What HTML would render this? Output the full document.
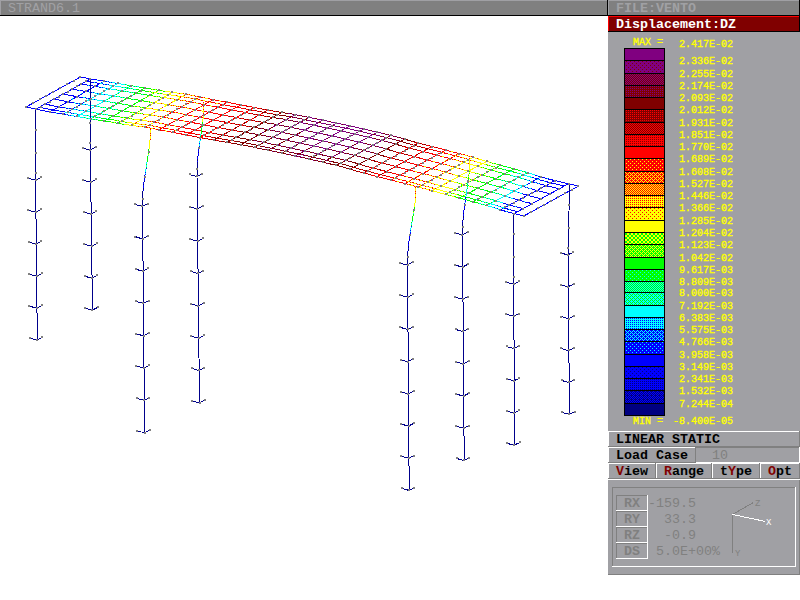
<!DOCTYPE html>
<html><head><meta charset="utf-8"><title>STRAND6.1 - VENTO</title>
<style>html,body{margin:0;padding:0;background:#fff;overflow:hidden}svg{display:block}text{font-family:"Liberation Mono",monospace;font-size:13.33px;white-space:pre}</style>
</head><body>
<svg width="800" height="600" viewBox="0 0 800 600">
<defs><linearGradient id="gOpt" gradientUnits="userSpaceOnUse" x1="768" y1="0" x2="792" y2="0"><stop offset="0" stop-color="#000"/><stop offset="0.0000" stop-color="#000"/><stop offset="0.0000" stop-color="#800000"/><stop offset="0.3333" stop-color="#800000"/><stop offset="0.3333" stop-color="#000"/><stop offset="1" stop-color="#000"/></linearGradient><linearGradient id="gtYpe" gradientUnits="userSpaceOnUse" x1="720" y1="0" x2="752" y2="0"><stop offset="0" stop-color="#000"/><stop offset="0.2500" stop-color="#000"/><stop offset="0.2500" stop-color="#800000"/><stop offset="0.5000" stop-color="#800000"/><stop offset="0.5000" stop-color="#000"/><stop offset="1" stop-color="#000"/></linearGradient><linearGradient id="gRange" gradientUnits="userSpaceOnUse" x1="664" y1="0" x2="704" y2="0"><stop offset="0" stop-color="#000"/><stop offset="0.0000" stop-color="#000"/><stop offset="0.0000" stop-color="#800000"/><stop offset="0.2000" stop-color="#800000"/><stop offset="0.2000" stop-color="#000"/><stop offset="1" stop-color="#000"/></linearGradient><linearGradient id="gView" gradientUnits="userSpaceOnUse" x1="616" y1="0" x2="648" y2="0"><stop offset="0" stop-color="#000"/><stop offset="0.0000" stop-color="#000"/><stop offset="0.0000" stop-color="#800000"/><stop offset="0.2500" stop-color="#800000"/><stop offset="0.2500" stop-color="#000"/><stop offset="1" stop-color="#000"/></linearGradient><pattern id="p1" x="625" y="61" width="4" height="4" patternUnits="userSpaceOnUse"><rect width="4" height="4" fill="#800080"/><rect x="1" y="0" width="1" height="1" fill="#800000"/><rect x="3" y="2" width="1" height="1" fill="#800000"/></pattern><pattern id="p2" x="625" y="74" width="2" height="2" patternUnits="userSpaceOnUse"><rect width="2" height="2" fill="#800080"/><rect x="0" y="0" width="1" height="1" fill="#800000"/><rect x="1" y="1" width="1" height="1" fill="#800000"/></pattern><pattern id="p3" x="625" y="86" width="2" height="2" patternUnits="userSpaceOnUse"><rect width="2" height="2" fill="#800000"/><rect x="1" y="0" width="1" height="1" fill="#800080"/></pattern><pattern id="p4" x="625" y="110" width="2" height="2" patternUnits="userSpaceOnUse"><rect width="2" height="2" fill="#800000"/><rect x="1" y="0" width="1" height="1" fill="#ff0000"/></pattern><pattern id="p5" x="625" y="123" width="2" height="2" patternUnits="userSpaceOnUse"><rect width="2" height="2" fill="#ff0000"/><rect x="0" y="0" width="1" height="1" fill="#800000"/><rect x="1" y="1" width="1" height="1" fill="#800000"/></pattern><pattern id="p6" x="625" y="135" width="2" height="2" patternUnits="userSpaceOnUse"><rect width="2" height="2" fill="#ff0000"/><rect x="1" y="0" width="1" height="1" fill="#800000"/></pattern><pattern id="p7" x="625" y="159" width="4" height="4" patternUnits="userSpaceOnUse"><rect width="4" height="4" fill="#ff0000"/><rect x="1" y="0" width="1" height="1" fill="#ffff00"/><rect x="3" y="2" width="1" height="1" fill="#ffff00"/></pattern><pattern id="p8" x="625" y="172" width="4" height="4" patternUnits="userSpaceOnUse"><rect width="4" height="4" fill="#ff0000"/><rect x="0" y="0" width="1" height="1" fill="#ffff00"/><rect x="1" y="1" width="1" height="1" fill="#ffff00"/><rect x="2" y="2" width="1" height="1" fill="#ffff00"/><rect x="3" y="3" width="1" height="1" fill="#ffff00"/><rect x="3" y="1" width="1" height="1" fill="#ffff00"/><rect x="1" y="3" width="1" height="1" fill="#ffff00"/></pattern><pattern id="p9" x="625" y="184" width="2" height="2" patternUnits="userSpaceOnUse"><rect width="2" height="2" fill="#ff0000"/><rect x="0" y="0" width="1" height="1" fill="#ffff00"/><rect x="1" y="1" width="1" height="1" fill="#ffff00"/></pattern><pattern id="p10" x="625" y="196" width="2" height="2" patternUnits="userSpaceOnUse"><rect width="2" height="2" fill="#ffff00"/><rect x="1" y="0" width="1" height="1" fill="#ff0000"/></pattern><pattern id="p11" x="625" y="208" width="4" height="4" patternUnits="userSpaceOnUse"><rect width="4" height="4" fill="#ffff00"/><rect x="1" y="0" width="1" height="1" fill="#ff0000"/><rect x="3" y="2" width="1" height="1" fill="#ff0000"/></pattern><pattern id="p12" x="625" y="233" width="4" height="4" patternUnits="userSpaceOnUse"><rect width="4" height="4" fill="#ffff00"/><rect x="0" y="0" width="1" height="1" fill="#00ff00"/><rect x="1" y="0" width="1" height="1" fill="#00ff00"/><rect x="0" y="1" width="1" height="1" fill="#00ff00"/><rect x="1" y="1" width="1" height="1" fill="#00ff00"/><rect x="2" y="2" width="1" height="1" fill="#00ff00"/><rect x="3" y="2" width="1" height="1" fill="#00ff00"/><rect x="2" y="3" width="1" height="1" fill="#00ff00"/><rect x="3" y="3" width="1" height="1" fill="#00ff00"/></pattern><pattern id="p13" x="625" y="245" width="4" height="4" patternUnits="userSpaceOnUse"><rect width="4" height="4" fill="#00ff00"/><rect x="0" y="0" width="1" height="1" fill="#ffff00"/><rect x="1" y="1" width="1" height="1" fill="#ffff00"/><rect x="2" y="2" width="1" height="1" fill="#ffff00"/><rect x="3" y="3" width="1" height="1" fill="#ffff00"/><rect x="3" y="1" width="1" height="1" fill="#ffff00"/><rect x="1" y="3" width="1" height="1" fill="#ffff00"/></pattern><pattern id="p14" x="625" y="270" width="4" height="4" patternUnits="userSpaceOnUse"><rect width="4" height="4" fill="#00ff00"/><rect x="1" y="0" width="1" height="1" fill="#00ffff"/><rect x="3" y="2" width="1" height="1" fill="#00ffff"/></pattern><pattern id="p15" x="625" y="282" width="2" height="2" patternUnits="userSpaceOnUse"><rect width="2" height="2" fill="#00ff00"/><rect x="0" y="0" width="1" height="1" fill="#00ffff"/><rect x="1" y="1" width="1" height="1" fill="#00ffff"/></pattern><pattern id="p16" x="625" y="293" width="4" height="4" patternUnits="userSpaceOnUse"><rect width="4" height="4" fill="#00ffff"/><rect x="0" y="0" width="1" height="1" fill="#00ff00"/><rect x="1" y="1" width="1" height="1" fill="#00ff00"/><rect x="2" y="2" width="1" height="1" fill="#00ff00"/><rect x="3" y="3" width="1" height="1" fill="#00ff00"/><rect x="3" y="1" width="1" height="1" fill="#00ff00"/><rect x="1" y="3" width="1" height="1" fill="#00ff00"/></pattern><pattern id="p17" x="625" y="318" width="2" height="2" patternUnits="userSpaceOnUse"><rect width="2" height="2" fill="#00ffff"/><rect x="1" y="0" width="1" height="1" fill="#0000ff"/></pattern><pattern id="p18" x="625" y="330" width="4" height="4" patternUnits="userSpaceOnUse"><rect width="4" height="4" fill="#0000ff"/><rect x="0" y="0" width="1" height="1" fill="#00ffff"/><rect x="1" y="1" width="1" height="1" fill="#00ffff"/><rect x="2" y="2" width="1" height="1" fill="#00ffff"/><rect x="3" y="3" width="1" height="1" fill="#00ffff"/><rect x="3" y="1" width="1" height="1" fill="#00ffff"/><rect x="1" y="3" width="1" height="1" fill="#00ffff"/></pattern><pattern id="p19" x="625" y="342" width="4" height="4" patternUnits="userSpaceOnUse"><rect width="4" height="4" fill="#0000ff"/><rect x="1" y="0" width="1" height="1" fill="#00ffff"/><rect x="3" y="2" width="1" height="1" fill="#00ffff"/></pattern><pattern id="p20" x="625" y="367" width="4" height="4" patternUnits="userSpaceOnUse"><rect width="4" height="4" fill="#0000ff"/><rect x="1" y="0" width="1" height="1" fill="#000080"/><rect x="3" y="2" width="1" height="1" fill="#000080"/></pattern><pattern id="p21" x="625" y="379" width="2" height="2" patternUnits="userSpaceOnUse"><rect width="2" height="2" fill="#0000ff"/><rect x="1" y="0" width="1" height="1" fill="#000080"/></pattern><pattern id="p22" x="625" y="391" width="4" height="4" patternUnits="userSpaceOnUse"><rect width="4" height="4" fill="#000080"/><rect x="0" y="0" width="1" height="1" fill="#0000ff"/><rect x="1" y="1" width="1" height="1" fill="#0000ff"/><rect x="2" y="2" width="1" height="1" fill="#0000ff"/><rect x="3" y="3" width="1" height="1" fill="#0000ff"/><rect x="3" y="1" width="1" height="1" fill="#0000ff"/><rect x="1" y="3" width="1" height="1" fill="#0000ff"/><rect x="0" y="2" width="1" height="1" fill="#0000ff"/></pattern></defs><rect x="0" y="0" width="800" height="600" fill="#ffffff"/>
<rect x="0" y="0" width="607" height="15" fill="#808080"/>
<rect x="0" y="0" width="607" height="1" fill="#a0a0a4"/>
<rect x="0" y="0" width="1" height="15" fill="#a0a0a4"/>
<rect x="0" y="15" width="800" height="1" fill="#000"/>
<rect x="607" y="0" width="1" height="16" fill="#000"/>
<text x="8" y="12" fill="#a0a0a4" style="font-size:13.33px">STRAND6.1</text>
<rect x="608" y="0" width="192" height="15" fill="#808080"/>
<rect x="608" y="0" width="192" height="1" fill="#a0a0a4"/>
<rect x="608" y="0" width="1" height="15" fill="#a0a0a4"/>
<text x="616" y="12" fill="#a0a0a4" style="font-size:13.33px" font-weight="bold">FILE:VENTO</text>
<rect x="608" y="16" width="192" height="15" fill="#800000"/>
<rect x="608" y="16" width="192" height="1" fill="#ff0000"/>
<rect x="608" y="16" width="1" height="15" fill="#ff0000"/>
<rect x="608" y="31" width="192" height="1" fill="#000"/>
<rect x="799" y="0" width="1" height="32" fill="#000"/>
<text x="616" y="28" fill="#ffffff" style="font-size:13.33px" font-weight="bold">Displacement:DZ</text>
<rect x="608" y="32" width="192" height="399" fill="#a0a0a4"/>
<rect x="624" y="48" width="41" height="368" fill="#000"/>
<rect x="625" y="49" width="39" height="11" fill="#800080"/>
<rect x="625" y="61" width="39" height="12" fill="url(#p1)"/>
<rect x="625" y="74" width="39" height="11" fill="url(#p2)"/>
<rect x="625" y="86" width="39" height="11" fill="url(#p3)"/>
<rect x="625" y="98" width="39" height="11" fill="#800000"/>
<rect x="625" y="110" width="39" height="12" fill="url(#p4)"/>
<rect x="625" y="123" width="39" height="11" fill="url(#p5)"/>
<rect x="625" y="135" width="39" height="11" fill="url(#p6)"/>
<rect x="625" y="147" width="39" height="11" fill="#ff0000"/>
<rect x="625" y="159" width="39" height="12" fill="url(#p7)"/>
<rect x="625" y="172" width="39" height="11" fill="url(#p8)"/>
<rect x="625" y="184" width="39" height="11" fill="url(#p9)"/>
<rect x="625" y="196" width="39" height="11" fill="url(#p10)"/>
<rect x="625" y="208" width="39" height="12" fill="url(#p11)"/>
<rect x="625" y="221" width="39" height="11" fill="#ffff00"/>
<rect x="625" y="233" width="39" height="11" fill="url(#p12)"/>
<rect x="625" y="245" width="39" height="12" fill="url(#p13)"/>
<rect x="625" y="258" width="39" height="11" fill="#00ff00"/>
<rect x="625" y="270" width="39" height="11" fill="url(#p14)"/>
<rect x="625" y="282" width="39" height="10" fill="url(#p15)"/>
<rect x="625" y="293" width="39" height="12" fill="url(#p16)"/>
<rect x="625" y="306" width="39" height="11" fill="#00ffff"/>
<rect x="625" y="318" width="39" height="11" fill="url(#p17)"/>
<rect x="625" y="330" width="39" height="11" fill="url(#p18)"/>
<rect x="625" y="342" width="39" height="12" fill="url(#p19)"/>
<rect x="625" y="355" width="39" height="11" fill="#0000ff"/>
<rect x="625" y="367" width="39" height="11" fill="url(#p20)"/>
<rect x="625" y="379" width="39" height="11" fill="url(#p21)"/>
<rect x="625" y="391" width="39" height="12" fill="url(#p22)"/>
<rect x="625" y="404" width="39" height="11" fill="#000080"/>
<text x="633" y="45" fill="#ffff00" style="font-size:10px" stroke="#ffff00" stroke-width="0.35">MAX =</text>
<text x="679" y="47" fill="#ffff00" style="font-size:10px" stroke="#ffff00" stroke-width="0.35">2.417E-02</text>
<text x="679" y="64" fill="#ffff00" style="font-size:10px" stroke="#ffff00" stroke-width="0.35">2.336E-02</text>
<text x="679" y="77" fill="#ffff00" style="font-size:10px" stroke="#ffff00" stroke-width="0.35">2.255E-02</text>
<text x="679" y="89" fill="#ffff00" style="font-size:10px" stroke="#ffff00" stroke-width="0.35">2.174E-02</text>
<text x="679" y="101" fill="#ffff00" style="font-size:10px" stroke="#ffff00" stroke-width="0.35">2.093E-02</text>
<text x="679" y="113" fill="#ffff00" style="font-size:10px" stroke="#ffff00" stroke-width="0.35">2.012E-02</text>
<text x="679" y="126" fill="#ffff00" style="font-size:10px" stroke="#ffff00" stroke-width="0.35">1.931E-02</text>
<text x="679" y="138" fill="#ffff00" style="font-size:10px" stroke="#ffff00" stroke-width="0.35">1.851E-02</text>
<text x="679" y="150" fill="#ffff00" style="font-size:10px" stroke="#ffff00" stroke-width="0.35">1.770E-02</text>
<text x="679" y="162" fill="#ffff00" style="font-size:10px" stroke="#ffff00" stroke-width="0.35">1.689E-02</text>
<text x="679" y="175" fill="#ffff00" style="font-size:10px" stroke="#ffff00" stroke-width="0.35">1.608E-02</text>
<text x="679" y="187" fill="#ffff00" style="font-size:10px" stroke="#ffff00" stroke-width="0.35">1.527E-02</text>
<text x="679" y="199" fill="#ffff00" style="font-size:10px" stroke="#ffff00" stroke-width="0.35">1.446E-02</text>
<text x="679" y="211" fill="#ffff00" style="font-size:10px" stroke="#ffff00" stroke-width="0.35">1.366E-02</text>
<text x="679" y="224" fill="#ffff00" style="font-size:10px" stroke="#ffff00" stroke-width="0.35">1.285E-02</text>
<text x="679" y="236" fill="#ffff00" style="font-size:10px" stroke="#ffff00" stroke-width="0.35">1.204E-02</text>
<text x="679" y="248" fill="#ffff00" style="font-size:10px" stroke="#ffff00" stroke-width="0.35">1.123E-02</text>
<text x="679" y="261" fill="#ffff00" style="font-size:10px" stroke="#ffff00" stroke-width="0.35">1.042E-02</text>
<text x="679" y="273" fill="#ffff00" style="font-size:10px" stroke="#ffff00" stroke-width="0.35">9.617E-03</text>
<text x="679" y="285" fill="#ffff00" style="font-size:10px" stroke="#ffff00" stroke-width="0.35">8.809E-03</text>
<text x="679" y="296" fill="#ffff00" style="font-size:10px" stroke="#ffff00" stroke-width="0.35">8.000E-03</text>
<text x="679" y="309" fill="#ffff00" style="font-size:10px" stroke="#ffff00" stroke-width="0.35">7.192E-03</text>
<text x="679" y="321" fill="#ffff00" style="font-size:10px" stroke="#ffff00" stroke-width="0.35">6.383E-03</text>
<text x="679" y="333" fill="#ffff00" style="font-size:10px" stroke="#ffff00" stroke-width="0.35">5.575E-03</text>
<text x="679" y="345" fill="#ffff00" style="font-size:10px" stroke="#ffff00" stroke-width="0.35">4.766E-03</text>
<text x="679" y="358" fill="#ffff00" style="font-size:10px" stroke="#ffff00" stroke-width="0.35">3.958E-03</text>
<text x="679" y="370" fill="#ffff00" style="font-size:10px" stroke="#ffff00" stroke-width="0.35">3.149E-03</text>
<text x="679" y="382" fill="#ffff00" style="font-size:10px" stroke="#ffff00" stroke-width="0.35">2.341E-03</text>
<text x="679" y="394" fill="#ffff00" style="font-size:10px" stroke="#ffff00" stroke-width="0.35">1.532E-03</text>
<text x="679" y="407" fill="#ffff00" style="font-size:10px" stroke="#ffff00" stroke-width="0.35">7.244E-04</text>
<text x="633" y="424" fill="#ffff00" style="font-size:10px" stroke="#ffff00" stroke-width="0.35">MIN =</text>
<text x="673" y="424" fill="#ffff00" style="font-size:10px" stroke="#ffff00" stroke-width="0.35">-8.400E-05</text>
<rect x="608" y="431" width="192" height="16" fill="#a0a0a4"/>
<rect x="608" y="431" width="192" height="1" fill="#ffffff"/>
<rect x="608" y="431" width="1" height="16" fill="#ffffff"/>
<rect x="608" y="446" width="192" height="1" fill="#808080"/>
<rect x="799" y="431" width="1" height="16" fill="#808080"/>
<text x="616" y="443" fill="#000" style="font-size:13.33px" font-weight="bold">LINEAR STATIC</text>
<rect x="608" y="447" width="192" height="16" fill="#a0a0a4"/>
<rect x="608" y="447" width="88" height="16" fill="#a0a0a4"/>
<rect x="608" y="447" width="88" height="1" fill="#ffffff"/>
<rect x="608" y="447" width="1" height="16" fill="#ffffff"/>
<rect x="608" y="462" width="88" height="1" fill="#808080"/>
<rect x="695" y="447" width="1" height="16" fill="#808080"/>
<rect x="696" y="447" width="104" height="1" fill="#808080"/>
<rect x="696" y="462" width="104" height="1" fill="#ffffff"/>
<rect x="799" y="447" width="1" height="16" fill="#ffffff"/>
<text x="616" y="459" fill="#000" style="font-size:13.33px" font-weight="bold">Load Case</text>
<text x="712" y="459" fill="#808080" style="font-size:13.33px">10</text>
<rect x="608" y="463" width="48" height="16" fill="#a0a0a4"/>
<rect x="608" y="463" width="48" height="1" fill="#ffffff"/>
<rect x="608" y="463" width="1" height="16" fill="#ffffff"/>
<rect x="608" y="478" width="48" height="1" fill="#808080"/>
<rect x="655" y="463" width="1" height="16" fill="#808080"/>
<text x="616" y="475" font-weight="bold" fill="url(#gView)">View</text>
<rect x="656" y="463" width="56" height="16" fill="#a0a0a4"/>
<rect x="656" y="463" width="56" height="1" fill="#ffffff"/>
<rect x="656" y="463" width="1" height="16" fill="#ffffff"/>
<rect x="656" y="478" width="56" height="1" fill="#808080"/>
<rect x="711" y="463" width="1" height="16" fill="#808080"/>
<text x="664" y="475" font-weight="bold" fill="url(#gRange)">Range</text>
<rect x="712" y="463" width="48" height="16" fill="#a0a0a4"/>
<rect x="712" y="463" width="48" height="1" fill="#ffffff"/>
<rect x="712" y="463" width="1" height="16" fill="#ffffff"/>
<rect x="712" y="478" width="48" height="1" fill="#808080"/>
<rect x="759" y="463" width="1" height="16" fill="#808080"/>
<text x="720" y="475" font-weight="bold" fill="url(#gtYpe)">tYpe</text>
<rect x="760" y="463" width="40" height="16" fill="#a0a0a4"/>
<rect x="760" y="463" width="40" height="1" fill="#ffffff"/>
<rect x="760" y="463" width="1" height="16" fill="#ffffff"/>
<rect x="760" y="478" width="40" height="1" fill="#808080"/>
<rect x="799" y="463" width="1" height="16" fill="#808080"/>
<text x="768" y="475" font-weight="bold" fill="url(#gOpt)">Opt</text>
<rect x="608" y="479" width="192" height="1" fill="#ffffff"/>
<rect x="608" y="480" width="192" height="95" fill="#a0a0a4"/>
<rect x="608" y="574" width="192" height="1" fill="#808080"/>
<rect x="799" y="480" width="1" height="95" fill="#808080"/>
<rect x="612" y="487" width="184" height="1" fill="#808080"/>
<rect x="612" y="487" width="1" height="80" fill="#808080"/>
<rect x="612" y="566" width="184" height="1" fill="#ffffff"/>
<rect x="795" y="487" width="1" height="80" fill="#ffffff"/>
<rect x="616" y="495" width="32" height="1" fill="#808080"/>
<rect x="616" y="495" width="1" height="16" fill="#808080"/>
<rect x="616" y="510" width="32" height="1" fill="#ffffff"/>
<rect x="647" y="495" width="1" height="16" fill="#ffffff"/>
<text x="624" y="507" fill="#808080" style="font-size:13.33px" font-weight="bold">RX</text>
<text x="648" y="507" fill="#808080" style="font-size:13.33px">-159.5</text>
<rect x="616" y="511" width="32" height="1" fill="#808080"/>
<rect x="616" y="511" width="1" height="16" fill="#808080"/>
<rect x="616" y="526" width="32" height="1" fill="#ffffff"/>
<rect x="647" y="511" width="1" height="16" fill="#ffffff"/>
<text x="624" y="523" fill="#808080" style="font-size:13.33px" font-weight="bold">RY</text>
<text x="648" y="523" fill="#808080" style="font-size:13.33px">  33.3</text>
<rect x="616" y="527" width="32" height="1" fill="#808080"/>
<rect x="616" y="527" width="1" height="16" fill="#808080"/>
<rect x="616" y="542" width="32" height="1" fill="#ffffff"/>
<rect x="647" y="527" width="1" height="16" fill="#ffffff"/>
<text x="624" y="539" fill="#808080" style="font-size:13.33px" font-weight="bold">RZ</text>
<text x="648" y="539" fill="#808080" style="font-size:13.33px">  -0.9</text>
<rect x="616" y="543" width="32" height="1" fill="#808080"/>
<rect x="616" y="543" width="1" height="16" fill="#808080"/>
<rect x="616" y="558" width="32" height="1" fill="#ffffff"/>
<rect x="647" y="543" width="1" height="16" fill="#ffffff"/>
<text x="624" y="555" fill="#808080" style="font-size:13.33px" font-weight="bold">DS</text>
<text x="648" y="555" fill="#808080" style="font-size:13.33px"> 5.0E+00%</text>
<g shape-rendering="crispEdges" fill="none" stroke-width="1">
<path d="M732.5 514.5L753.5 502.5M732.5 514.5L732.5 552.5" stroke="#808080"/>
<path d="M732.5 514.5L765.5 521.5" stroke="#ffffff"/>
</g>
<text x="755" y="506" fill="#808080" style="font-size:9px" font-family="Liberation Sans">Z</text>
<text x="766" y="525" fill="#ffffff" style="font-size:9px" font-family="Liberation Sans">X</text>
<text x="735" y="556" fill="#808080" style="font-size:9px" font-family="Liberation Sans">Y</text>
<g shape-rendering="crispEdges" fill="none" stroke-width="1">
<path stroke="#800080" d="M331.8 135.9L338.7 137.4M340.9 130.9L347.7 132.4M343.2 124.5L350.0 125.9M350.0 125.9L356.8 127.4M356.8 127.4L363.6 129.0M336.4 133.4L340.9 130.9M340.9 130.9L345.4 128.4M345.4 128.4L350.0 125.9M340.2 127.0L347.0 128.4M347.0 128.4L353.8 129.9M353.8 129.9L360.6 131.5"/>
<path stroke="#800080" d="M306.8 144.5L313.7 145.9M313.7 145.9L320.5 147.4M320.5 147.4L327.3 149.0M302.2 136.6L309.1 138.1M309.1 138.1L315.9 139.5M315.9 139.5L322.7 140.9M322.7 140.9L329.6 142.4M329.6 142.4L336.4 144.0M336.4 144.0L343.2 145.6M343.2 145.6L350.1 147.2M297.7 128.8L304.5 130.2M304.5 130.2L311.3 131.6M311.3 131.6L318.2 133.1M318.2 133.1L325.0 134.5M325.0 134.5L331.8 135.9M338.7 137.4L345.5 139.0M345.5 139.0L352.3 140.6M352.3 140.6L359.1 142.2M359.1 142.2L366.0 143.8M299.9 122.4L306.8 123.8M306.8 123.8L313.6 125.2M313.6 125.2L320.4 126.6M320.4 126.6L327.2 128.1M327.2 128.1L334.1 129.5M334.1 129.5L340.9 130.9M347.7 132.4L354.6 134.0M354.6 134.0L361.4 135.6M361.4 135.6L368.2 137.2M368.2 137.2L375.1 138.8M309.0 117.4L315.8 118.8M315.8 118.8L322.7 120.2M322.7 120.2L329.5 121.6M329.5 121.6L336.3 123.1M336.3 123.1L343.2 124.5M363.6 129.0L370.5 130.6M370.5 130.6L377.3 132.2M377.3 132.2L384.1 133.8M300.0 132.7L304.5 130.2M304.5 130.2L309.0 127.7M309.0 127.7L313.6 125.2M313.6 125.2L318.1 122.7M318.1 122.7L322.7 120.2M304.5 140.6L309.1 138.1M309.1 138.1L313.6 135.6M313.6 135.6L318.2 133.1M318.2 133.1L322.7 130.6M322.7 130.6L327.2 128.1M327.2 128.1L331.8 125.6M331.8 125.6L336.3 123.1M309.1 148.4L313.7 145.9M313.7 145.9L318.2 143.4M318.2 143.4L322.7 140.9M322.7 140.9L327.3 138.4M327.3 138.4L331.8 135.9M331.8 135.9L336.4 133.4M327.3 149.0L331.9 146.5M331.9 146.5L336.4 144.0M336.4 144.0L340.9 141.5M340.9 141.5L345.5 139.0M345.5 139.0L350.0 136.5M350.0 136.5L354.6 134.0M354.6 134.0L359.1 131.5M359.1 131.5L363.6 129.0M354.6 144.7L359.1 142.2M359.1 142.2L363.7 139.7M363.7 139.7L368.2 137.2M368.2 137.2L372.8 134.7M372.8 134.7L377.3 132.2M306.0 119.9L312.8 121.3M312.8 121.3L319.7 122.7M319.7 122.7L326.5 124.1M326.5 124.1L333.3 125.6M333.3 125.6L340.2 127.0M360.6 131.5L367.5 133.1M367.5 133.1L374.3 134.7M374.3 134.7L381.1 136.3"/>
<path stroke="#800000" stroke-dasharray="1 5" d="M306.8 144.5L313.7 145.9M313.7 145.9L320.5 147.4M320.5 147.4L327.3 149.0M302.2 136.6L309.1 138.1M309.1 138.1L315.9 139.5M315.9 139.5L322.7 140.9M322.7 140.9L329.6 142.4M329.6 142.4L336.4 144.0M336.4 144.0L343.2 145.6M343.2 145.6L350.1 147.2M297.7 128.8L304.5 130.2M304.5 130.2L311.3 131.6M311.3 131.6L318.2 133.1M318.2 133.1L325.0 134.5M325.0 134.5L331.8 135.9M338.7 137.4L345.5 139.0M345.5 139.0L352.3 140.6M352.3 140.6L359.1 142.2M359.1 142.2L366.0 143.8M299.9 122.4L306.8 123.8M306.8 123.8L313.6 125.2M313.6 125.2L320.4 126.6M320.4 126.6L327.2 128.1M327.2 128.1L334.1 129.5M334.1 129.5L340.9 130.9M347.7 132.4L354.6 134.0M354.6 134.0L361.4 135.6M361.4 135.6L368.2 137.2M368.2 137.2L375.1 138.8M309.0 117.4L315.8 118.8M315.8 118.8L322.7 120.2M322.7 120.2L329.5 121.6M329.5 121.6L336.3 123.1M336.3 123.1L343.2 124.5M363.6 129.0L370.5 130.6M370.5 130.6L377.3 132.2M377.3 132.2L384.1 133.8M300.0 132.7L304.5 130.2M304.5 130.2L309.0 127.7M309.0 127.7L313.6 125.2M313.6 125.2L318.1 122.7M318.1 122.7L322.7 120.2M304.5 140.6L309.1 138.1M309.1 138.1L313.6 135.6M313.6 135.6L318.2 133.1M318.2 133.1L322.7 130.6M322.7 130.6L327.2 128.1M327.2 128.1L331.8 125.6M331.8 125.6L336.3 123.1M309.1 148.4L313.7 145.9M313.7 145.9L318.2 143.4M318.2 143.4L322.7 140.9M322.7 140.9L327.3 138.4M327.3 138.4L331.8 135.9M331.8 135.9L336.4 133.4M327.3 149.0L331.9 146.5M331.9 146.5L336.4 144.0M336.4 144.0L340.9 141.5M340.9 141.5L345.5 139.0M345.5 139.0L350.0 136.5M350.0 136.5L354.6 134.0M354.6 134.0L359.1 131.5M359.1 131.5L363.6 129.0M354.6 144.7L359.1 142.2M359.1 142.2L363.7 139.7M363.7 139.7L368.2 137.2M368.2 137.2L372.8 134.7M372.8 134.7L377.3 132.2M306.0 119.9L312.8 121.3M312.8 121.3L319.7 122.7M319.7 122.7L326.5 124.1M326.5 124.1L333.3 125.6M333.3 125.6L340.2 127.0M360.6 131.5L367.5 133.1M367.5 133.1L374.3 134.7M374.3 134.7L381.1 136.3"/>
<path stroke="#800080" d="M295.5 155.9L302.3 157.4M277.3 145.2L284.1 146.6M284.1 146.6L290.9 148.1M290.9 148.1L297.7 149.5M297.7 149.5L304.6 150.9M304.6 150.9L311.4 152.4M311.4 152.4L318.2 154.0M318.2 154.0L325.1 155.6M325.1 155.6L331.9 157.2M265.8 136.0L272.7 137.4M272.7 137.4L279.5 138.8M279.5 138.8L286.3 140.2M286.3 140.2L293.2 141.6M293.2 141.6L300.0 143.1M300.0 143.1L306.8 144.5M327.3 149.0L334.1 150.6M334.1 150.6L341.0 152.2M341.0 152.2L347.8 153.8M347.8 153.8L354.6 155.4M268.1 129.6L274.9 131.0M274.9 131.0L281.8 132.4M281.8 132.4L288.6 133.8M288.6 133.8L295.4 135.2M295.4 135.2L302.2 136.6M350.1 147.2L356.9 148.8M356.9 148.8L363.7 150.4M363.7 150.4L370.5 152.1M277.2 124.6L284.0 126.0M284.0 126.0L290.8 127.4M290.8 127.4L297.7 128.8M366.0 143.8L372.8 145.4M372.8 145.4L379.6 147.1M286.3 119.6L293.1 121.0M293.1 121.0L299.9 122.4M375.1 138.8L381.9 140.4M381.9 140.4L388.7 142.1M295.4 114.6L302.2 116.0M302.2 116.0L309.0 117.4M384.1 133.8L391.0 135.4M391.0 135.4L397.8 137.1M268.1 129.6L272.6 127.1M272.6 127.1L277.2 124.6M277.2 124.6L281.7 122.1M281.7 122.1L286.3 119.6M286.3 119.6L290.8 117.1M290.8 117.1L295.4 114.6M272.7 137.4L277.2 134.9M277.2 134.9L281.8 132.4M281.8 132.4L286.3 129.9M286.3 129.9L290.8 127.4M290.8 127.4L295.4 124.9M295.4 124.9L299.9 122.4M299.9 122.4L304.5 119.9M304.5 119.9L309.0 117.4M277.3 145.2L281.8 142.7M281.8 142.7L286.3 140.2M286.3 140.2L290.9 137.7M290.9 137.7L295.4 135.2M295.4 135.2L300.0 132.7M286.4 150.6L290.9 148.1M290.9 148.1L295.5 145.6M295.5 145.6L300.0 143.1M300.0 143.1L304.5 140.6M295.5 155.9L300.0 153.4M300.0 153.4L304.6 150.9M304.6 150.9L309.1 148.4M313.7 156.5L318.2 154.0M318.2 154.0L322.8 151.5M322.8 151.5L327.3 149.0M331.9 157.2L336.4 154.7M336.4 154.7L341.0 152.2M341.0 152.2L345.5 149.7M345.5 149.7L350.1 147.2M350.1 147.2L354.6 144.7M354.6 155.4L359.2 152.9M359.2 152.9L363.7 150.4M363.7 150.4L368.3 147.9M368.3 147.9L372.8 145.4M372.8 145.4L377.3 142.9M377.3 142.9L381.9 140.4M381.9 140.4L386.4 137.9M386.4 137.9L391.0 135.4M298.5 153.9L305.3 155.4M292.4 117.1L299.2 118.5M299.2 118.5L306.0 119.9M381.1 136.3L388.0 137.9M388.0 137.9L394.8 139.6"/>
<path stroke="#800000" stroke-dasharray="1 1" d="M295.5 155.9L302.3 157.4M277.3 145.2L284.1 146.6M284.1 146.6L290.9 148.1M290.9 148.1L297.7 149.5M297.7 149.5L304.6 150.9M304.6 150.9L311.4 152.4M311.4 152.4L318.2 154.0M318.2 154.0L325.1 155.6M325.1 155.6L331.9 157.2M265.8 136.0L272.7 137.4M272.7 137.4L279.5 138.8M279.5 138.8L286.3 140.2M286.3 140.2L293.2 141.6M293.2 141.6L300.0 143.1M300.0 143.1L306.8 144.5M327.3 149.0L334.1 150.6M334.1 150.6L341.0 152.2M341.0 152.2L347.8 153.8M347.8 153.8L354.6 155.4M268.1 129.6L274.9 131.0M274.9 131.0L281.8 132.4M281.8 132.4L288.6 133.8M288.6 133.8L295.4 135.2M295.4 135.2L302.2 136.6M350.1 147.2L356.9 148.8M356.9 148.8L363.7 150.4M363.7 150.4L370.5 152.1M277.2 124.6L284.0 126.0M284.0 126.0L290.8 127.4M290.8 127.4L297.7 128.8M366.0 143.8L372.8 145.4M372.8 145.4L379.6 147.1M286.3 119.6L293.1 121.0M293.1 121.0L299.9 122.4M375.1 138.8L381.9 140.4M381.9 140.4L388.7 142.1M295.4 114.6L302.2 116.0M302.2 116.0L309.0 117.4M384.1 133.8L391.0 135.4M391.0 135.4L397.8 137.1M268.1 129.6L272.6 127.1M272.6 127.1L277.2 124.6M277.2 124.6L281.7 122.1M281.7 122.1L286.3 119.6M286.3 119.6L290.8 117.1M290.8 117.1L295.4 114.6M272.7 137.4L277.2 134.9M277.2 134.9L281.8 132.4M281.8 132.4L286.3 129.9M286.3 129.9L290.8 127.4M290.8 127.4L295.4 124.9M295.4 124.9L299.9 122.4M299.9 122.4L304.5 119.9M304.5 119.9L309.0 117.4M277.3 145.2L281.8 142.7M281.8 142.7L286.3 140.2M286.3 140.2L290.9 137.7M290.9 137.7L295.4 135.2M295.4 135.2L300.0 132.7M286.4 150.6L290.9 148.1M290.9 148.1L295.5 145.6M295.5 145.6L300.0 143.1M300.0 143.1L304.5 140.6M295.5 155.9L300.0 153.4M300.0 153.4L304.6 150.9M304.6 150.9L309.1 148.4M313.7 156.5L318.2 154.0M318.2 154.0L322.8 151.5M322.8 151.5L327.3 149.0M331.9 157.2L336.4 154.7M336.4 154.7L341.0 152.2M341.0 152.2L345.5 149.7M345.5 149.7L350.1 147.2M350.1 147.2L354.6 144.7M354.6 155.4L359.2 152.9M359.2 152.9L363.7 150.4M363.7 150.4L368.3 147.9M368.3 147.9L372.8 145.4M372.8 145.4L377.3 142.9M377.3 142.9L381.9 140.4M381.9 140.4L386.4 137.9M386.4 137.9L391.0 135.4M298.5 153.9L305.3 155.4M292.4 117.1L299.2 118.5M299.2 118.5L306.0 119.9M381.1 136.3L388.0 137.9M388.0 137.9L394.8 139.6"/>
<path stroke="#800000" d="M261.3 148.8L268.2 150.2M268.2 150.2L275.0 151.6M275.0 151.6L281.8 153.1M281.8 153.1L288.7 154.5M288.7 154.5L295.5 155.9M302.3 157.4L309.1 159.0M309.1 159.0L316.0 160.6M316.0 160.6L322.8 162.2M322.8 162.2L329.6 163.8M249.9 139.6L256.8 141.0M256.8 141.0L263.6 142.4M263.6 142.4L270.4 143.8M270.4 143.8L277.3 145.2M331.9 157.2L338.7 158.8M338.7 158.8L345.6 160.4M345.6 160.4L352.4 162.1M252.2 133.5L259.0 134.6M259.0 134.6L265.8 136.0M354.6 155.4L361.5 157.1M361.5 157.1L368.3 159.1M261.3 128.5L268.1 129.6M370.5 152.1L377.4 154.1M270.4 123.5L277.2 124.6M379.6 147.1L386.5 149.1M279.4 118.5L286.3 119.6M388.7 142.1L395.5 144.1M288.5 113.5L295.4 114.6M397.8 137.1L404.6 139.1M249.9 139.6L254.5 137.1M254.5 137.1L259.0 134.6M259.0 134.6L263.6 132.1M263.6 132.1L268.1 129.6M254.5 147.4L259.1 144.9M259.1 144.9L263.6 142.4M263.6 142.4L268.1 139.9M268.1 139.9L272.7 137.4M268.2 150.2L272.7 147.7M272.7 147.7L277.3 145.2M281.8 153.1L286.4 150.6M309.1 159.0L313.7 156.5M322.8 162.2L327.3 159.7M327.3 159.7L331.9 157.2M341.0 162.9L345.6 160.4M345.6 160.4L350.1 157.9M350.1 157.9L354.6 155.4M264.3 146.8L271.2 148.2M271.2 148.2L278.0 149.6M278.0 149.6L284.8 151.1M284.8 151.1L291.7 152.5M291.7 152.5L298.5 153.9M305.3 155.4L312.1 157.0M312.1 157.0L319.0 158.6M319.0 158.6L325.8 160.2M325.8 160.2L332.6 161.8M285.5 116.0L292.4 117.1M394.8 139.6L401.6 141.6"/>
<path stroke="#800080" stroke-dasharray="1 3" d="M261.3 148.8L268.2 150.2M268.2 150.2L275.0 151.6M275.0 151.6L281.8 153.1M281.8 153.1L288.7 154.5M288.7 154.5L295.5 155.9M302.3 157.4L309.1 159.0M309.1 159.0L316.0 160.6M316.0 160.6L322.8 162.2M322.8 162.2L329.6 163.8M249.9 139.6L256.8 141.0M256.8 141.0L263.6 142.4M263.6 142.4L270.4 143.8M270.4 143.8L277.3 145.2M331.9 157.2L338.7 158.8M338.7 158.8L345.6 160.4M345.6 160.4L352.4 162.1M252.2 133.5L259.0 134.6M259.0 134.6L265.8 136.0M354.6 155.4L361.5 157.1M361.5 157.1L368.3 159.1M261.3 128.5L268.1 129.6M370.5 152.1L377.4 154.1M270.4 123.5L277.2 124.6M379.6 147.1L386.5 149.1M279.4 118.5L286.3 119.6M388.7 142.1L395.5 144.1M288.5 113.5L295.4 114.6M397.8 137.1L404.6 139.1M249.9 139.6L254.5 137.1M254.5 137.1L259.0 134.6M259.0 134.6L263.6 132.1M263.6 132.1L268.1 129.6M254.5 147.4L259.1 144.9M259.1 144.9L263.6 142.4M263.6 142.4L268.1 139.9M268.1 139.9L272.7 137.4M268.2 150.2L272.7 147.7M272.7 147.7L277.3 145.2M281.8 153.1L286.4 150.6M309.1 159.0L313.7 156.5M322.8 162.2L327.3 159.7M327.3 159.7L331.9 157.2M341.0 162.9L345.6 160.4M345.6 160.4L350.1 157.9M350.1 157.9L354.6 155.4M264.3 146.8L271.2 148.2M271.2 148.2L278.0 149.6M278.0 149.6L284.8 151.1M284.8 151.1L291.7 152.5M291.7 152.5L298.5 153.9M305.3 155.4L312.1 157.0M312.1 157.0L319.0 158.6M319.0 158.6L325.8 160.2M325.8 160.2L332.6 161.8M285.5 116.0L292.4 117.1M394.8 139.6L401.6 141.6"/>
<path stroke="#800000" d="M234.0 143.5L240.9 144.6M240.9 144.6L247.7 146.0M247.7 146.0L254.5 147.4M254.5 147.4L261.3 148.8M329.6 163.8L336.5 165.4M336.5 165.4L343.3 167.1M343.3 167.1L350.1 169.1M236.3 137.4L243.1 138.5M243.1 138.5L249.9 139.6M352.4 162.1L359.2 164.1M245.4 132.4L252.2 133.5M254.4 127.4L261.3 128.5M377.4 154.1L384.2 156.2M263.5 122.4L270.4 123.5M386.5 149.1L393.3 151.2M272.6 117.4L279.4 118.5M395.5 144.1L402.4 146.2M281.7 112.4L288.5 113.5M404.6 139.1L411.5 141.2M245.4 132.4L249.9 129.9M249.9 129.9L254.4 127.4M254.4 127.4L259.0 124.9M259.0 124.9L263.5 122.4M263.5 122.4L268.1 119.9M268.1 119.9L272.6 117.4M272.6 117.4L277.2 114.9M277.2 114.9L281.7 112.4M240.9 144.6L245.4 142.1M245.4 142.1L249.9 139.6M336.5 165.4L341.0 162.9M354.7 166.6L359.2 164.1M359.2 164.1L363.8 161.6M363.8 161.6L368.3 159.1M368.3 159.1L372.8 156.6M372.8 156.6L377.4 154.1M377.4 154.1L381.9 151.6M381.9 151.6L386.5 149.1M386.5 149.1L391.0 146.6M391.0 146.6L395.5 144.1M395.5 144.1L400.1 141.6M400.1 141.6L404.6 139.1M237.0 141.5L243.9 142.6M243.9 142.6L250.7 144.0M250.7 144.0L257.5 145.4M257.5 145.4L264.3 146.8M332.6 161.8L339.5 163.4M339.5 163.4L346.3 165.1M346.3 165.1L353.1 167.1M278.7 114.9L285.5 116.0M401.6 141.6L408.5 143.7"/>
<path stroke="#800000" d="M220.4 141.3L227.2 142.4M227.2 142.4L234.0 143.5M350.1 169.1L357.0 171.2M229.4 136.3L236.3 137.4M359.2 164.1L366.0 166.2M238.5 131.3L245.4 132.4M368.3 159.1L375.1 161.2M247.6 126.3L254.4 127.4M256.7 121.3L263.5 122.4M265.8 116.3L272.6 117.4M274.9 111.3L281.7 112.4M227.2 142.4L231.7 139.9M231.7 139.9L236.3 137.4M236.3 137.4L240.8 134.9M240.8 134.9L245.4 132.4M350.1 169.1L354.7 166.6M223.4 139.3L230.2 140.4M230.2 140.4L237.0 141.5M353.1 167.1L360.0 169.2M271.9 113.8L278.7 114.9"/>
<path stroke="#ff0000" stroke-dasharray="1 3" d="M220.4 141.3L227.2 142.4M227.2 142.4L234.0 143.5M350.1 169.1L357.0 171.2M229.4 136.3L236.3 137.4M359.2 164.1L366.0 166.2M238.5 131.3L245.4 132.4M368.3 159.1L375.1 161.2M247.6 126.3L254.4 127.4M256.7 121.3L263.5 122.4M265.8 116.3L272.6 117.4M274.9 111.3L281.7 112.4M227.2 142.4L231.7 139.9M231.7 139.9L236.3 137.4M236.3 137.4L240.8 134.9M240.8 134.9L245.4 132.4M350.1 169.1L354.7 166.6M223.4 139.3L230.2 140.4M230.2 140.4L237.0 141.5M353.1 167.1L360.0 169.2M271.9 113.8L278.7 114.9"/>
<path stroke="#ff0000" d="M206.7 138.8L213.5 140.1M213.5 140.1L220.4 141.3M357.0 171.2L363.8 173.0M363.8 173.0L370.6 174.8M215.8 133.8L222.6 135.1M222.6 135.1L229.4 136.3M366.0 166.2L372.9 168.0M372.9 168.0L379.7 169.8M224.9 128.8L231.7 130.1M231.7 130.1L238.5 131.3M375.1 161.2L382.0 163.0M382.0 163.0L388.8 164.8M234.0 123.8L240.8 125.1M240.8 125.1L247.6 126.3M384.2 156.2L391.0 158.0M391.0 158.0L397.9 159.8M243.0 118.8L249.9 120.1M249.9 120.1L256.7 121.3M393.3 151.2L400.1 153.0M400.1 153.0L406.9 154.8M252.1 113.8L258.9 115.1M258.9 115.1L265.8 116.3M402.4 146.2L409.2 148.0M409.2 148.0L416.0 149.8M261.2 108.8L268.0 110.1M268.0 110.1L274.9 111.3M411.5 141.2L418.3 143.0M418.3 143.0L425.1 144.8M213.5 140.1L218.1 137.6M218.1 137.6L222.6 135.1M222.6 135.1L227.2 132.6M227.2 132.6L231.7 130.1M231.7 130.1L236.2 127.6M236.2 127.6L240.8 125.1M240.8 125.1L245.3 122.6M245.3 122.6L249.9 120.1M249.9 120.1L254.4 117.6M254.4 117.6L258.9 115.1M258.9 115.1L263.5 112.6M263.5 112.6L268.0 110.1M363.8 173.0L368.3 170.5M368.3 170.5L372.9 168.0M372.9 168.0L377.4 165.5M377.4 165.5L382.0 163.0M382.0 163.0L386.5 160.5M386.5 160.5L391.0 158.0M391.0 158.0L395.6 155.5M395.6 155.5L400.1 153.0M400.1 153.0L404.7 150.5M404.7 150.5L409.2 148.0M409.2 148.0L413.7 145.5M413.7 145.5L418.3 143.0M209.7 136.8L216.5 138.1M216.5 138.1L223.4 139.3M360.0 169.2L366.8 171.0M366.8 171.0L373.6 172.8M258.2 111.3L265.0 112.6M265.0 112.6L271.9 113.8M408.5 143.7L415.3 145.5M415.3 145.5L422.1 147.3"/>
<path stroke="#800000" stroke-dasharray="1 1" d="M206.7 138.8L213.5 140.1M213.5 140.1L220.4 141.3M357.0 171.2L363.8 173.0M363.8 173.0L370.6 174.8M215.8 133.8L222.6 135.1M222.6 135.1L229.4 136.3M366.0 166.2L372.9 168.0M372.9 168.0L379.7 169.8M224.9 128.8L231.7 130.1M231.7 130.1L238.5 131.3M375.1 161.2L382.0 163.0M382.0 163.0L388.8 164.8M234.0 123.8L240.8 125.1M240.8 125.1L247.6 126.3M384.2 156.2L391.0 158.0M391.0 158.0L397.9 159.8M243.0 118.8L249.9 120.1M249.9 120.1L256.7 121.3M393.3 151.2L400.1 153.0M400.1 153.0L406.9 154.8M252.1 113.8L258.9 115.1M258.9 115.1L265.8 116.3M402.4 146.2L409.2 148.0M409.2 148.0L416.0 149.8M261.2 108.8L268.0 110.1M268.0 110.1L274.9 111.3M411.5 141.2L418.3 143.0M418.3 143.0L425.1 144.8M213.5 140.1L218.1 137.6M218.1 137.6L222.6 135.1M222.6 135.1L227.2 132.6M227.2 132.6L231.7 130.1M231.7 130.1L236.2 127.6M236.2 127.6L240.8 125.1M240.8 125.1L245.3 122.6M245.3 122.6L249.9 120.1M249.9 120.1L254.4 117.6M254.4 117.6L258.9 115.1M258.9 115.1L263.5 112.6M263.5 112.6L268.0 110.1M363.8 173.0L368.3 170.5M368.3 170.5L372.9 168.0M372.9 168.0L377.4 165.5M377.4 165.5L382.0 163.0M382.0 163.0L386.5 160.5M386.5 160.5L391.0 158.0M391.0 158.0L395.6 155.5M395.6 155.5L400.1 153.0M400.1 153.0L404.7 150.5M404.7 150.5L409.2 148.0M409.2 148.0L413.7 145.5M413.7 145.5L418.3 143.0M209.7 136.8L216.5 138.1M216.5 138.1L223.4 139.3M360.0 169.2L366.8 171.0M366.8 171.0L373.6 172.8M258.2 111.3L265.0 112.6M265.0 112.6L271.9 113.8M408.5 143.7L415.3 145.5M415.3 145.5L422.1 147.3"/>
<path stroke="#ff0000" d="M193.0 136.2L199.9 137.5M199.9 137.5L206.7 138.8M370.6 174.8L377.4 176.5M377.4 176.5L384.3 178.3M202.1 131.2L209.0 132.5M209.0 132.5L215.8 133.8M379.7 169.8L386.5 171.5M386.5 171.5L393.4 173.3M211.2 126.2L218.0 127.5M218.0 127.5L224.9 128.8M388.8 164.8L395.6 166.5M395.6 166.5L402.4 168.3M220.3 121.2L227.1 122.5M227.1 122.5L234.0 123.8M397.9 159.8L404.7 161.5M404.7 161.5L411.5 163.3M229.4 116.2L236.2 117.5M236.2 117.5L243.0 118.8M406.9 154.8L413.8 156.5M413.8 156.5L420.6 158.3M238.5 111.2L245.3 112.5M245.3 112.5L252.1 113.8M416.0 149.8L422.9 151.5M422.9 151.5L429.7 153.3M247.5 106.2L254.4 107.5M254.4 107.5L261.2 108.8M425.1 144.8L431.9 146.5M431.9 146.5L438.8 148.3M199.9 137.5L204.4 135.0M204.4 135.0L209.0 132.5M209.0 132.5L213.5 130.0M213.5 130.0L218.0 127.5M218.0 127.5L222.6 125.0M222.6 125.0L227.1 122.5M227.1 122.5L231.7 120.0M231.7 120.0L236.2 117.5M236.2 117.5L240.7 115.0M240.7 115.0L245.3 112.5M245.3 112.5L249.8 110.0M249.8 110.0L254.4 107.5M377.4 176.5L382.0 174.0M382.0 174.0L386.5 171.5M386.5 171.5L391.1 169.0M391.1 169.0L395.6 166.5M395.6 166.5L400.2 164.0M400.2 164.0L404.7 161.5M404.7 161.5L409.2 159.0M409.2 159.0L413.8 156.5M413.8 156.5L418.3 154.0M418.3 154.0L422.9 151.5M422.9 151.5L427.4 149.0M427.4 149.0L431.9 146.5M196.0 134.2L202.9 135.5M202.9 135.5L209.7 136.8M373.6 172.8L380.4 174.5M380.4 174.5L387.3 176.3M244.5 108.7L251.4 110.0M251.4 110.0L258.2 111.3M422.1 147.3L428.9 149.0M428.9 149.0L435.8 150.8"/>
<path stroke="#800000" stroke-dasharray="1 3" d="M193.0 136.2L199.9 137.5M199.9 137.5L206.7 138.8M370.6 174.8L377.4 176.5M377.4 176.5L384.3 178.3M202.1 131.2L209.0 132.5M209.0 132.5L215.8 133.8M379.7 169.8L386.5 171.5M386.5 171.5L393.4 173.3M211.2 126.2L218.0 127.5M218.0 127.5L224.9 128.8M388.8 164.8L395.6 166.5M395.6 166.5L402.4 168.3M220.3 121.2L227.1 122.5M227.1 122.5L234.0 123.8M397.9 159.8L404.7 161.5M404.7 161.5L411.5 163.3M229.4 116.2L236.2 117.5M236.2 117.5L243.0 118.8M406.9 154.8L413.8 156.5M413.8 156.5L420.6 158.3M238.5 111.2L245.3 112.5M245.3 112.5L252.1 113.8M416.0 149.8L422.9 151.5M422.9 151.5L429.7 153.3M247.5 106.2L254.4 107.5M254.4 107.5L261.2 108.8M425.1 144.8L431.9 146.5M431.9 146.5L438.8 148.3M199.9 137.5L204.4 135.0M204.4 135.0L209.0 132.5M209.0 132.5L213.5 130.0M213.5 130.0L218.0 127.5M218.0 127.5L222.6 125.0M222.6 125.0L227.1 122.5M227.1 122.5L231.7 120.0M231.7 120.0L236.2 117.5M236.2 117.5L240.7 115.0M240.7 115.0L245.3 112.5M245.3 112.5L249.8 110.0M249.8 110.0L254.4 107.5M377.4 176.5L382.0 174.0M382.0 174.0L386.5 171.5M386.5 171.5L391.1 169.0M391.1 169.0L395.6 166.5M395.6 166.5L400.2 164.0M400.2 164.0L404.7 161.5M404.7 161.5L409.2 159.0M409.2 159.0L413.8 156.5M413.8 156.5L418.3 154.0M418.3 154.0L422.9 151.5M422.9 151.5L427.4 149.0M427.4 149.0L431.9 146.5M196.0 134.2L202.9 135.5M202.9 135.5L209.7 136.8M373.6 172.8L380.4 174.5M380.4 174.5L387.3 176.3M244.5 108.7L251.4 110.0M251.4 110.0L258.2 111.3M422.1 147.3L428.9 149.0M428.9 149.0L435.8 150.8"/>
<path stroke="#ff0000" d="M172.6 132.3L179.4 133.6M179.4 133.6L186.2 134.9M186.2 134.9L193.0 136.2M384.3 178.3L391.1 180.0M181.6 127.3L188.5 128.6M188.5 128.6L195.3 129.9M195.3 129.9L202.1 131.2M393.4 173.3L400.2 175.0M190.7 122.3L197.6 123.6M197.6 123.6L204.4 124.9M204.4 124.9L211.2 126.2M402.4 168.3L409.3 170.0M199.8 117.3L206.6 118.6M206.6 118.6L213.5 119.9M213.5 119.9L220.3 121.2M411.5 163.3L418.4 165.0M208.9 112.3L215.7 113.6M215.7 113.6L222.5 114.9M222.5 114.9L229.4 116.2M420.6 158.3L427.4 160.0M218.0 107.3L224.8 108.6M224.8 108.6L231.6 109.9M231.6 109.9L238.5 111.2M429.7 153.3L436.5 155.0M227.1 102.3L233.9 103.6M233.9 103.6L240.7 104.9M240.7 104.9L247.5 106.2M438.8 148.3L445.6 150.0M186.2 134.9L190.8 132.4M190.8 132.4L195.3 129.9M195.3 129.9L199.8 127.4M199.8 127.4L204.4 124.9M204.4 124.9L208.9 122.4M208.9 122.4L213.5 119.9M213.5 119.9L218.0 117.4M218.0 117.4L222.5 114.9M222.5 114.9L227.1 112.4M227.1 112.4L231.6 109.9M231.6 109.9L236.2 107.4M236.2 107.4L240.7 104.9M391.1 180.0L395.6 177.5M395.6 177.5L400.2 175.0M400.2 175.0L404.7 172.5M404.7 172.5L409.3 170.0M409.3 170.0L413.8 167.5M413.8 167.5L418.4 165.0M418.4 165.0L422.9 162.5M422.9 162.5L427.4 160.0M427.4 160.0L432.0 157.5M432.0 157.5L436.5 155.0M436.5 155.0L441.1 152.5M441.1 152.5L445.6 150.0M175.6 130.3L182.4 131.6M182.4 131.6L189.2 132.9M189.2 132.9L196.0 134.2M387.3 176.3L394.1 178.0M224.1 104.8L230.9 106.1M230.9 106.1L237.7 107.4M237.7 107.4L244.5 108.7M435.8 150.8L442.6 152.5"/>
<path stroke="#ff0000" d="M158.9 129.7L165.7 131.0M165.7 131.0L172.6 132.3M391.1 180.0L397.9 181.8M397.9 181.8L404.8 183.5M168.0 124.7L174.8 126.0M174.8 126.0L181.6 127.3M400.2 175.0L407.0 176.8M407.0 176.8L413.8 178.5M177.1 119.7L183.9 121.0M183.9 121.0L190.7 122.3M409.3 170.0L416.1 171.8M416.1 171.8L422.9 173.5M186.1 114.7L193.0 116.0M193.0 116.0L199.8 117.3M418.4 165.0L425.2 166.8M425.2 166.8L432.0 168.5M195.2 109.6L202.1 111.0M202.1 111.0L208.9 112.3M427.4 160.0L434.3 161.8M434.3 161.8L441.1 163.5M204.3 104.6L211.1 106.0M211.1 106.0L218.0 107.3M436.5 155.0L443.4 156.8M443.4 156.8L450.2 158.5M213.4 99.6L220.2 101.0M220.2 101.0L227.1 102.3M445.6 150.0L452.4 151.8M452.4 151.8L459.3 153.5M195.2 109.6L199.8 107.1M199.8 107.1L204.3 104.6M204.3 104.6L208.9 102.1M208.9 102.1L213.4 99.6M172.6 132.3L177.1 129.8M177.1 129.8L181.6 127.3M181.6 127.3L186.2 124.8M186.2 124.8L190.7 122.3M190.7 122.3L195.3 119.8M195.3 119.8L199.8 117.3M199.8 117.3L204.3 114.8M204.3 114.8L208.9 112.3M208.9 112.3L213.4 109.8M213.4 109.8L218.0 107.3M218.0 107.3L222.5 104.8M222.5 104.8L227.1 102.3M161.9 127.7L168.7 129.0M168.7 129.0L175.6 130.3M394.1 178.0L400.9 179.8M400.9 179.8L407.8 181.5M210.4 102.1L217.2 103.5M217.2 103.5L224.1 104.8M442.6 152.5L449.4 154.3M449.4 154.3L456.3 156.0"/>
<path stroke="#ffff00" stroke-dasharray="1 5" d="M158.9 129.7L165.7 131.0M165.7 131.0L172.6 132.3M391.1 180.0L397.9 181.8M397.9 181.8L404.8 183.5M168.0 124.7L174.8 126.0M174.8 126.0L181.6 127.3M400.2 175.0L407.0 176.8M407.0 176.8L413.8 178.5M177.1 119.7L183.9 121.0M183.9 121.0L190.7 122.3M409.3 170.0L416.1 171.8M416.1 171.8L422.9 173.5M186.1 114.7L193.0 116.0M193.0 116.0L199.8 117.3M418.4 165.0L425.2 166.8M425.2 166.8L432.0 168.5M195.2 109.6L202.1 111.0M202.1 111.0L208.9 112.3M427.4 160.0L434.3 161.8M434.3 161.8L441.1 163.5M204.3 104.6L211.1 106.0M211.1 106.0L218.0 107.3M436.5 155.0L443.4 156.8M443.4 156.8L450.2 158.5M213.4 99.6L220.2 101.0M220.2 101.0L227.1 102.3M445.6 150.0L452.4 151.8M452.4 151.8L459.3 153.5M195.2 109.6L199.8 107.1M199.8 107.1L204.3 104.6M204.3 104.6L208.9 102.1M208.9 102.1L213.4 99.6M172.6 132.3L177.1 129.8M177.1 129.8L181.6 127.3M181.6 127.3L186.2 124.8M186.2 124.8L190.7 122.3M190.7 122.3L195.3 119.8M195.3 119.8L199.8 117.3M199.8 117.3L204.3 114.8M204.3 114.8L208.9 112.3M208.9 112.3L213.4 109.8M213.4 109.8L218.0 107.3M218.0 107.3L222.5 104.8M222.5 104.8L227.1 102.3M161.9 127.7L168.7 129.0M168.7 129.0L175.6 130.3M394.1 178.0L400.9 179.8M400.9 179.8L407.8 181.5M210.4 102.1L217.2 103.5M217.2 103.5L224.1 104.8M442.6 152.5L449.4 154.3M449.4 154.3L456.3 156.0"/>
<path stroke="#ff0000" d="M145.2 127.2L152.1 128.4M152.1 128.4L158.9 129.7M404.8 183.5L411.6 185.3M154.3 122.1L161.1 123.4M161.1 123.4L168.0 124.7M413.8 178.5L420.7 180.3M163.4 117.1L170.2 118.4M170.2 118.4L177.1 119.7M422.9 173.5L429.8 175.3M172.5 112.0L179.3 113.3M179.3 113.3L186.1 114.7M432.0 168.5L438.8 170.3M181.6 107.0L188.4 108.3M188.4 108.3L195.2 109.6M441.1 163.5L447.9 165.3M183.8 100.6L190.7 101.9M190.7 101.9L197.5 103.3M197.5 103.3L204.3 104.6M450.2 158.5L457.0 160.3M192.9 95.5L199.7 96.9M199.7 96.9L206.6 98.3M206.6 98.3L213.4 99.6M459.3 153.5L466.1 155.3M163.4 117.1L167.9 114.5M167.9 114.5L172.5 112.0M172.5 112.0L177.0 109.5M177.0 109.5L181.6 107.0M181.6 107.0L186.1 104.5M186.1 104.5L190.7 101.9M190.7 101.9L195.2 99.4M195.2 99.4L199.7 96.9M158.9 129.7L163.4 127.2M163.4 127.2L168.0 124.7M168.0 124.7L172.5 122.2M172.5 122.2L177.1 119.7M177.1 119.7L181.6 117.2M181.6 117.2L186.1 114.7M186.1 114.7L190.7 112.2M190.7 112.2L195.2 109.6M404.8 183.5L409.3 181.0M409.3 181.0L413.8 178.5M413.8 178.5L418.4 176.0M418.4 176.0L422.9 173.5M422.9 173.5L427.5 171.0M427.5 171.0L432.0 168.5M432.0 168.5L436.6 166.0M436.6 166.0L441.1 163.5M441.1 163.5L445.6 161.0M445.6 161.0L450.2 158.5M450.2 158.5L454.7 156.0M454.7 156.0L459.3 153.5M148.2 125.2L155.1 126.4M155.1 126.4L161.9 127.7M407.8 181.5L414.6 183.3M189.9 98.0L196.7 99.4M196.7 99.4L203.6 100.8M203.6 100.8L210.4 102.1M456.3 156.0L463.1 157.8"/>
<path stroke="#ffff00" stroke-dasharray="1 2" d="M145.2 127.2L152.1 128.4M152.1 128.4L158.9 129.7M404.8 183.5L411.6 185.3M154.3 122.1L161.1 123.4M161.1 123.4L168.0 124.7M413.8 178.5L420.7 180.3M163.4 117.1L170.2 118.4M170.2 118.4L177.1 119.7M422.9 173.5L429.8 175.3M172.5 112.0L179.3 113.3M179.3 113.3L186.1 114.7M432.0 168.5L438.8 170.3M181.6 107.0L188.4 108.3M188.4 108.3L195.2 109.6M441.1 163.5L447.9 165.3M183.8 100.6L190.7 101.9M190.7 101.9L197.5 103.3M197.5 103.3L204.3 104.6M450.2 158.5L457.0 160.3M192.9 95.5L199.7 96.9M199.7 96.9L206.6 98.3M206.6 98.3L213.4 99.6M459.3 153.5L466.1 155.3M163.4 117.1L167.9 114.5M167.9 114.5L172.5 112.0M172.5 112.0L177.0 109.5M177.0 109.5L181.6 107.0M181.6 107.0L186.1 104.5M186.1 104.5L190.7 101.9M190.7 101.9L195.2 99.4M195.2 99.4L199.7 96.9M158.9 129.7L163.4 127.2M163.4 127.2L168.0 124.7M168.0 124.7L172.5 122.2M172.5 122.2L177.1 119.7M177.1 119.7L181.6 117.2M181.6 117.2L186.1 114.7M186.1 114.7L190.7 112.2M190.7 112.2L195.2 109.6M404.8 183.5L409.3 181.0M409.3 181.0L413.8 178.5M413.8 178.5L418.4 176.0M418.4 176.0L422.9 173.5M422.9 173.5L427.5 171.0M427.5 171.0L432.0 168.5M432.0 168.5L436.6 166.0M436.6 166.0L441.1 163.5M441.1 163.5L445.6 161.0M445.6 161.0L450.2 158.5M450.2 158.5L454.7 156.0M454.7 156.0L459.3 153.5M148.2 125.2L155.1 126.4M155.1 126.4L161.9 127.7M407.8 181.5L414.6 183.3M189.9 98.0L196.7 99.4M196.7 99.4L203.6 100.8M203.6 100.8L210.4 102.1M456.3 156.0L463.1 157.8"/>
<path stroke="#ff0000" d="M411.6 185.3L418.4 187.1M147.5 121.1L154.3 122.1M420.7 180.3L427.5 182.1M156.6 116.0L163.4 117.1M429.8 175.3L436.6 177.2M165.7 110.9L172.5 112.0M438.8 170.3L445.7 172.2M167.9 104.7L174.7 105.7M174.7 105.7L181.6 107.0M447.9 165.3L454.8 167.3M177.0 99.5L183.8 100.6M457.0 160.3L463.8 162.3M186.1 94.4L192.9 95.5M466.1 155.3L472.9 157.4M181.5 96.9L186.1 94.4M145.2 127.2L149.8 124.6M149.8 124.6L154.3 122.1M154.3 122.1L158.9 119.6M158.9 119.6L163.4 117.1M418.4 187.1L423.0 184.6M423.0 184.6L427.5 182.1M427.5 182.1L432.0 179.7M432.0 179.7L436.6 177.2M436.6 177.2L441.1 174.7M441.1 174.7L445.7 172.2M445.7 172.2L450.2 169.7M414.6 183.3L421.4 185.1M183.1 96.9L189.9 98.0M463.1 157.8L469.9 159.9"/>
<path stroke="#ffff00" stroke-dasharray="1 1" d="M411.6 185.3L418.4 187.1M147.5 121.1L154.3 122.1M420.7 180.3L427.5 182.1M156.6 116.0L163.4 117.1M429.8 175.3L436.6 177.2M165.7 110.9L172.5 112.0M438.8 170.3L445.7 172.2M167.9 104.7L174.7 105.7M174.7 105.7L181.6 107.0M447.9 165.3L454.8 167.3M177.0 99.5L183.8 100.6M457.0 160.3L463.8 162.3M186.1 94.4L192.9 95.5M466.1 155.3L472.9 157.4M181.5 96.9L186.1 94.4M145.2 127.2L149.8 124.6M149.8 124.6L154.3 122.1M154.3 122.1L158.9 119.6M158.9 119.6L163.4 117.1M418.4 187.1L423.0 184.6M423.0 184.6L427.5 182.1M427.5 182.1L432.0 179.7M432.0 179.7L436.6 177.2M436.6 177.2L441.1 174.7M441.1 174.7L445.7 172.2M445.7 172.2L450.2 169.7M414.6 183.3L421.4 185.1M183.1 96.9L189.9 98.0M463.1 157.8L469.9 159.9"/>
<path stroke="#ffff00" d="M138.4 126.3L145.2 127.2M418.4 187.1L425.3 188.9M425.3 188.9L432.1 190.7M427.5 182.1L434.3 184.0M149.7 115.0L156.6 116.0M436.6 177.2L443.4 179.1M158.8 109.8L165.7 110.9M445.7 172.2L452.5 174.2M454.8 167.3L461.6 169.2M170.2 98.5L177.0 99.5M463.8 162.3L470.7 164.3M179.2 93.3L186.1 94.4M472.9 157.4L479.8 159.4M158.8 109.8L163.4 107.3M163.4 107.3L167.9 104.7M167.9 104.7L172.5 102.1M172.5 102.1L177.0 99.5M177.0 99.5L181.5 96.9M450.2 169.7L454.8 167.3M454.8 167.3L459.3 164.8M459.3 164.8L463.8 162.3M463.8 162.3L468.4 159.8M468.4 159.8L472.9 157.4M141.4 124.3L148.2 125.2M421.4 185.1L428.3 186.9M428.3 186.9L435.1 188.7M176.2 95.8L183.1 96.9M469.9 159.9L476.8 161.9M150.5 129.0L150.3 135.4M150.3 135.4L149.9 141.9M204.0 102.5L203.8 108.7M203.8 108.7L203.4 114.8M416.0 187.0L415.8 193.5M415.8 193.5L415.3 200.0"/>
<path stroke="#ff0000" stroke-dasharray="1 3" d="M138.4 126.3L145.2 127.2M418.4 187.1L425.3 188.9M425.3 188.9L432.1 190.7M427.5 182.1L434.3 184.0M149.7 115.0L156.6 116.0M436.6 177.2L443.4 179.1M158.8 109.8L165.7 110.9M445.7 172.2L452.5 174.2M454.8 167.3L461.6 169.2M170.2 98.5L177.0 99.5M463.8 162.3L470.7 164.3M179.2 93.3L186.1 94.4M472.9 157.4L479.8 159.4M158.8 109.8L163.4 107.3M163.4 107.3L167.9 104.7M167.9 104.7L172.5 102.1M172.5 102.1L177.0 99.5M177.0 99.5L181.5 96.9M450.2 169.7L454.8 167.3M454.8 167.3L459.3 164.8M459.3 164.8L463.8 162.3M463.8 162.3L468.4 159.8M468.4 159.8L472.9 157.4M141.4 124.3L148.2 125.2M421.4 185.1L428.3 186.9M428.3 186.9L435.1 188.7M176.2 95.8L183.1 96.9M469.9 159.9L476.8 161.9M150.5 129.0L150.3 135.4M150.3 135.4L149.9 141.9M204.0 102.5L203.8 108.7M203.8 108.7L203.4 114.8M416.0 187.0L415.8 193.5M415.8 193.5L415.3 200.0"/>
<path stroke="#ffff00" d="M131.6 125.3L138.4 126.3M432.1 190.7L438.9 192.6M140.7 120.1L147.5 121.1M434.3 184.0L441.2 185.9M441.2 185.9L448.0 187.7M142.9 114.0L149.7 115.0M443.4 179.1L450.3 181.0M152.0 108.8L158.8 109.8M452.5 174.2L459.3 176.1M161.1 103.6L167.9 104.7M461.6 169.2L468.4 171.2M163.3 97.5L170.2 98.5M172.4 92.3L179.2 93.3M131.6 125.3L136.1 122.7M136.1 122.7L140.7 120.1M140.7 120.1L145.2 117.6M145.2 117.6L149.7 115.0M149.7 115.0L154.3 112.4M154.3 112.4L158.8 109.8M432.1 190.7L436.6 188.3M436.6 188.3L441.2 185.9M441.2 185.9L445.7 183.4M445.7 183.4L450.3 181.0M450.3 181.0L454.8 178.5M134.6 123.3L141.4 124.3M435.1 188.7L441.9 190.6M169.4 94.8L176.2 95.8M470.0 158.0L469.8 164.4"/>
<path stroke="#ff0000" stroke-dasharray="1 7" d="M131.6 125.3L138.4 126.3M432.1 190.7L438.9 192.6M140.7 120.1L147.5 121.1M434.3 184.0L441.2 185.9M441.2 185.9L448.0 187.7M142.9 114.0L149.7 115.0M443.4 179.1L450.3 181.0M152.0 108.8L158.8 109.8M452.5 174.2L459.3 176.1M161.1 103.6L167.9 104.7M461.6 169.2L468.4 171.2M163.3 97.5L170.2 98.5M172.4 92.3L179.2 93.3M131.6 125.3L136.1 122.7M136.1 122.7L140.7 120.1M140.7 120.1L145.2 117.6M145.2 117.6L149.7 115.0M149.7 115.0L154.3 112.4M154.3 112.4L158.8 109.8M432.1 190.7L436.6 188.3M436.6 188.3L441.2 185.9M441.2 185.9L445.7 183.4M445.7 183.4L450.3 181.0M450.3 181.0L454.8 178.5M134.6 123.3L141.4 124.3M435.1 188.7L441.9 190.6M169.4 94.8L176.2 95.8M470.0 158.0L469.8 164.4"/>
<path stroke="#ffff00" d="M124.7 124.4L131.6 125.3M438.9 192.6L445.7 194.4M133.8 119.2L140.7 120.1M448.0 187.7L454.8 189.5M450.3 181.0L457.1 182.8M145.2 107.9L152.0 108.8M459.3 176.1L466.2 177.9M154.2 102.7L161.1 103.6M468.4 171.2L475.2 173.1M470.7 164.3L477.5 166.3M165.6 91.4L172.4 92.3M479.8 159.4L486.6 161.4M154.2 102.7L158.8 100.1M158.8 100.1L163.3 97.5M163.3 97.5L167.9 94.9M167.9 94.9L172.4 92.3M454.8 178.5L459.3 176.1M459.3 176.1L463.9 173.6M463.9 173.6L468.4 171.2M468.4 171.2L473.0 168.7M473.0 168.7L477.5 166.3M477.5 166.3L482.0 163.9M482.0 163.9L486.6 161.4M127.7 122.4L134.6 123.3M441.9 190.6L448.7 192.4M162.6 93.9L169.4 94.8M476.8 161.9L483.6 163.9M149.9 141.9L149.1 148.3M203.4 114.8L202.8 121.0M415.3 200.0L414.6 206.5M469.8 164.4L469.4 170.8"/>
<path stroke="#ffff00" d="M445.7 194.4L452.6 196.2M127.0 118.2L133.8 119.2M454.8 189.5L461.7 191.4M136.1 113.1L142.9 114.0M457.1 182.8L463.9 184.7M463.9 184.7L470.7 186.5M466.2 177.9L473.0 179.8M147.4 101.7L154.2 102.7M475.2 173.1L482.1 174.9M156.5 96.6L163.3 97.5M477.5 166.3L484.3 168.2M486.6 161.4L493.4 163.3M136.1 113.1L140.6 110.5M140.6 110.5L145.2 107.9M145.2 107.9L149.7 105.3M149.7 105.3L154.2 102.7M445.7 194.4L450.3 192.0M450.3 192.0L454.8 189.5M454.8 189.5L459.4 187.1M459.4 187.1L463.9 184.7M463.9 184.7L468.5 182.2M468.5 182.2L473.0 179.8M473.0 179.8L477.5 177.3M448.7 192.4L455.6 194.2M483.6 163.9L490.4 165.8M469.4 170.8L468.7 177.2"/>
<path stroke="#00ff00" stroke-dasharray="1 1" d="M445.7 194.4L452.6 196.2M127.0 118.2L133.8 119.2M454.8 189.5L461.7 191.4M136.1 113.1L142.9 114.0M457.1 182.8L463.9 184.7M463.9 184.7L470.7 186.5M466.2 177.9L473.0 179.8M147.4 101.7L154.2 102.7M475.2 173.1L482.1 174.9M156.5 96.6L163.3 97.5M477.5 166.3L484.3 168.2M486.6 161.4L493.4 163.3M136.1 113.1L140.6 110.5M140.6 110.5L145.2 107.9M145.2 107.9L149.7 105.3M149.7 105.3L154.2 102.7M445.7 194.4L450.3 192.0M450.3 192.0L454.8 189.5M454.8 189.5L459.4 187.1M459.4 187.1L463.9 184.7M463.9 184.7L468.5 182.2M468.5 182.2L473.0 179.8M473.0 179.8L477.5 177.3M448.7 192.4L455.6 194.2M483.6 163.9L490.4 165.8M469.4 170.8L468.7 177.2"/>
<path stroke="#00ff00" d="M111.1 122.1L117.9 123.3M117.9 123.3L124.7 124.4M452.6 196.2L459.4 198.1M120.2 117.0L127.0 118.2M461.7 191.4L468.5 193.2M129.3 111.9L136.1 113.1M470.7 186.5L477.6 188.3M131.5 105.7L138.3 106.8M138.3 106.8L145.2 107.9M473.0 179.8L479.8 181.6M140.6 100.5L147.4 101.7M482.1 174.9L488.9 176.7M149.7 95.4L156.5 96.6M484.3 168.2L491.2 170.0M491.2 170.0L498.0 171.9M151.9 89.2L158.8 90.3M158.8 90.3L165.6 91.4M493.4 163.3L500.2 165.2M145.1 98.0L149.7 95.4M149.7 95.4L154.2 92.9M154.2 92.9L158.8 90.3M117.9 123.3L122.5 120.7M122.5 120.7L127.0 118.2M127.0 118.2L131.5 115.6M131.5 115.6L136.1 113.1M477.5 177.3L482.1 174.9M482.1 174.9L486.6 172.5M486.6 172.5L491.2 170.0M491.2 170.0L495.7 167.6M495.7 167.6L500.2 165.2M459.4 198.1L463.9 195.6M463.9 195.6L468.5 193.2M114.1 120.1L120.9 121.3M120.9 121.3L127.7 122.4M455.6 194.2L462.4 196.1M148.9 91.7L155.8 92.8M155.8 92.8L162.6 93.9M490.4 165.8L497.2 167.7M149.1 148.3L148.2 154.8M202.8 121.0L202.0 127.1M414.6 206.5L413.6 213.0"/>
<path stroke="#ffff00" stroke-dasharray="1 2" d="M111.1 122.1L117.9 123.3M117.9 123.3L124.7 124.4M452.6 196.2L459.4 198.1M120.2 117.0L127.0 118.2M461.7 191.4L468.5 193.2M129.3 111.9L136.1 113.1M470.7 186.5L477.6 188.3M131.5 105.7L138.3 106.8M138.3 106.8L145.2 107.9M473.0 179.8L479.8 181.6M140.6 100.5L147.4 101.7M482.1 174.9L488.9 176.7M149.7 95.4L156.5 96.6M484.3 168.2L491.2 170.0M491.2 170.0L498.0 171.9M151.9 89.2L158.8 90.3M158.8 90.3L165.6 91.4M493.4 163.3L500.2 165.2M145.1 98.0L149.7 95.4M149.7 95.4L154.2 92.9M154.2 92.9L158.8 90.3M117.9 123.3L122.5 120.7M122.5 120.7L127.0 118.2M127.0 118.2L131.5 115.6M131.5 115.6L136.1 113.1M477.5 177.3L482.1 174.9M482.1 174.9L486.6 172.5M486.6 172.5L491.2 170.0M491.2 170.0L495.7 167.6M495.7 167.6L500.2 165.2M459.4 198.1L463.9 195.6M463.9 195.6L468.5 193.2M114.1 120.1L120.9 121.3M120.9 121.3L127.7 122.4M455.6 194.2L462.4 196.1M148.9 91.7L155.8 92.8M155.8 92.8L162.6 93.9M490.4 165.8L497.2 167.7M149.1 148.3L148.2 154.8M202.8 121.0L202.0 127.1M414.6 206.5L413.6 213.0"/>
<path stroke="#00ff00" d="M104.3 121.0L111.1 122.1M459.4 198.1L466.2 199.9M466.2 199.9L473.1 201.8M113.3 115.9L120.2 117.0M468.5 193.2L475.3 195.0M122.4 110.8L129.3 111.9M477.6 188.3L484.4 190.2M124.7 104.5L131.5 105.7M479.8 181.6L486.7 183.5M133.8 99.4L140.6 100.5M488.9 176.7L495.7 178.6M142.8 94.3L149.7 95.4M498.0 171.9L504.8 173.7M145.1 88.0L151.9 89.2M500.2 165.2L507.1 167.0M113.3 115.9L117.9 113.3M117.9 113.3L122.4 110.8M122.4 110.8L127.0 108.2M127.0 108.2L131.5 105.7M131.5 105.7L136.0 103.1M136.0 103.1L140.6 100.5M140.6 100.5L145.1 98.0M468.5 193.2L473.0 190.8M473.0 190.8L477.6 188.3M477.6 188.3L482.1 185.9M482.1 185.9L486.7 183.5M486.7 183.5L491.2 181.0M491.2 181.0L495.7 178.6M495.7 178.6L500.3 176.1M107.3 119.0L114.1 120.1M462.4 196.1L469.2 197.9M469.2 197.9L476.1 199.8M142.1 90.5L148.9 91.7M497.2 167.7L504.1 169.5M468.7 177.2L467.9 183.5"/>
<path stroke="#00ff00" d="M97.4 119.9L104.3 121.0M473.1 201.8L479.9 203.6M106.5 114.7L113.3 115.9M475.3 195.0L482.1 196.9M115.6 109.6L122.4 110.8M484.4 190.2L491.2 192.0M117.8 103.4L124.7 104.5M486.7 183.5L493.5 185.3M493.5 185.3L500.3 187.1M126.9 98.3L133.8 99.4M495.7 178.6L502.6 180.4M136.0 93.1L142.8 94.3M504.8 173.7L511.6 175.5M138.3 86.9L145.1 88.0M507.1 167.0L513.9 168.8M513.9 168.8L520.7 170.7M122.4 100.8L126.9 98.3M126.9 98.3L131.5 95.7M131.5 95.7L136.0 93.1M136.0 93.1L140.6 90.6M140.6 90.6L145.1 88.0M104.3 121.0L108.8 118.4M108.8 118.4L113.3 115.9M500.3 176.1L504.8 173.7M504.8 173.7L509.4 171.3M509.4 171.3L513.9 168.8M473.1 201.8L477.6 199.3M477.6 199.3L482.1 196.9M482.1 196.9L486.7 194.4M486.7 194.4L491.2 192.0M100.4 117.9L107.3 119.0M476.1 199.8L482.9 201.6M135.3 89.4L142.1 90.5M504.1 169.5L510.9 171.3M510.9 171.3L517.7 173.2M148.2 154.8L147.2 161.2M202.0 127.1L201.2 133.3M413.6 213.0L412.5 219.5"/>
<path stroke="#00ffff" stroke-dasharray="1 5" d="M97.4 119.9L104.3 121.0M473.1 201.8L479.9 203.6M106.5 114.7L113.3 115.9M475.3 195.0L482.1 196.9M115.6 109.6L122.4 110.8M484.4 190.2L491.2 192.0M117.8 103.4L124.7 104.5M486.7 183.5L493.5 185.3M493.5 185.3L500.3 187.1M126.9 98.3L133.8 99.4M495.7 178.6L502.6 180.4M136.0 93.1L142.8 94.3M504.8 173.7L511.6 175.5M138.3 86.9L145.1 88.0M507.1 167.0L513.9 168.8M513.9 168.8L520.7 170.7M122.4 100.8L126.9 98.3M126.9 98.3L131.5 95.7M131.5 95.7L136.0 93.1M136.0 93.1L140.6 90.6M140.6 90.6L145.1 88.0M104.3 121.0L108.8 118.4M108.8 118.4L113.3 115.9M500.3 176.1L504.8 173.7M504.8 173.7L509.4 171.3M509.4 171.3L513.9 168.8M473.1 201.8L477.6 199.3M477.6 199.3L482.1 196.9M482.1 196.9L486.7 194.4M486.7 194.4L491.2 192.0M100.4 117.9L107.3 119.0M476.1 199.8L482.9 201.6M135.3 89.4L142.1 90.5M504.1 169.5L510.9 171.3M510.9 171.3L517.7 173.2M148.2 154.8L147.2 161.2M202.0 127.1L201.2 133.3M413.6 213.0L412.5 219.5"/>
<path stroke="#00ff00" d="M90.6 118.7L97.4 119.9M479.9 203.6L486.7 205.5M99.7 113.6L106.5 114.7M482.1 196.9L489.0 198.7M489.0 198.7L495.8 200.7M101.9 107.3L108.8 108.5M108.8 108.5L115.6 109.6M491.2 192.0L498.1 193.8M111.0 102.2L117.8 103.4M500.3 187.1L507.1 189.0M120.1 97.1L126.9 98.3M502.6 180.4L509.4 182.3M122.4 90.9L129.2 92.0M129.2 92.0L136.0 93.1M511.6 175.5L518.5 177.4M131.4 85.7L138.3 86.9M520.7 170.7L527.6 172.6M90.6 118.7L95.1 116.2M95.1 116.2L99.7 113.6M99.7 113.6L104.2 111.0M104.2 111.0L108.8 108.5M108.8 108.5L113.3 105.9M113.3 105.9L117.8 103.4M117.8 103.4L122.4 100.8M491.2 192.0L495.8 189.6M495.8 189.6L500.3 187.1M500.3 187.1L504.9 184.7M504.9 184.7L509.4 182.3M509.4 182.3L513.9 179.8M513.9 179.8L518.5 177.4M93.6 116.7L100.4 117.9M482.9 201.6L489.7 203.5M128.4 88.2L135.3 89.4M517.7 173.2L524.6 175.1M467.9 183.5L466.9 189.9"/>
<path stroke="#00ffff" stroke-dasharray="1 1" d="M90.6 118.7L97.4 119.9M479.9 203.6L486.7 205.5M99.7 113.6L106.5 114.7M482.1 196.9L489.0 198.7M489.0 198.7L495.8 200.7M101.9 107.3L108.8 108.5M108.8 108.5L115.6 109.6M491.2 192.0L498.1 193.8M111.0 102.2L117.8 103.4M500.3 187.1L507.1 189.0M120.1 97.1L126.9 98.3M502.6 180.4L509.4 182.3M122.4 90.9L129.2 92.0M129.2 92.0L136.0 93.1M511.6 175.5L518.5 177.4M131.4 85.7L138.3 86.9M520.7 170.7L527.6 172.6M90.6 118.7L95.1 116.2M95.1 116.2L99.7 113.6M99.7 113.6L104.2 111.0M104.2 111.0L108.8 108.5M108.8 108.5L113.3 105.9M113.3 105.9L117.8 103.4M117.8 103.4L122.4 100.8M491.2 192.0L495.8 189.6M495.8 189.6L500.3 187.1M500.3 187.1L504.9 184.7M504.9 184.7L509.4 182.3M509.4 182.3L513.9 179.8M513.9 179.8L518.5 177.4M93.6 116.7L100.4 117.9M482.9 201.6L489.7 203.5M128.4 88.2L135.3 89.4M517.7 173.2L524.6 175.1M467.9 183.5L466.9 189.9"/>
<path stroke="#00ffff" d="M83.8 117.6L90.6 118.7M92.9 112.5L99.7 113.6M95.1 106.2L101.9 107.3M498.1 193.8L504.9 196.0M104.2 101.1L111.0 102.2M113.3 96.0L120.1 97.1M509.4 182.3L516.2 184.3M115.5 89.7L122.4 90.9M518.5 177.4L525.3 179.5M124.6 84.6L131.4 85.7M104.2 101.1L108.7 98.5M108.7 98.5L113.3 96.0M113.3 96.0L117.8 93.4M117.8 93.4L122.4 90.9M122.4 90.9L126.9 88.3M126.9 88.3L131.4 85.7M518.5 177.4L523.0 175.0M523.0 175.0L527.6 172.6M486.7 205.5L491.3 203.1M491.3 203.1L495.8 200.7M495.8 200.7L500.3 198.3M86.8 115.6L93.6 116.7M121.6 87.1L128.4 88.2M147.2 161.2L146.2 167.7M201.2 133.3L200.2 139.4M412.5 219.5L411.4 225.9"/>
<path stroke="#00ff00" stroke-dasharray="1 2" d="M83.8 117.6L90.6 118.7M92.9 112.5L99.7 113.6M95.1 106.2L101.9 107.3M498.1 193.8L504.9 196.0M104.2 101.1L111.0 102.2M113.3 96.0L120.1 97.1M509.4 182.3L516.2 184.3M115.5 89.7L122.4 90.9M518.5 177.4L525.3 179.5M124.6 84.6L131.4 85.7M104.2 101.1L108.7 98.5M108.7 98.5L113.3 96.0M113.3 96.0L117.8 93.4M117.8 93.4L122.4 90.9M122.4 90.9L126.9 88.3M126.9 88.3L131.4 85.7M518.5 177.4L523.0 175.0M523.0 175.0L527.6 172.6M486.7 205.5L491.3 203.1M491.3 203.1L495.8 200.7M495.8 200.7L500.3 198.3M86.8 115.6L93.6 116.7M121.6 87.1L128.4 88.2M147.2 161.2L146.2 167.7M201.2 133.3L200.2 139.4M412.5 219.5L411.4 225.9"/>
<path stroke="#00ffff" d="M76.9 116.5L83.8 117.6M486.7 205.5L493.6 207.6M86.0 111.3L92.9 112.5M495.8 200.7L502.6 202.9M88.3 105.1L95.1 106.2M97.4 100.0L104.2 101.1M507.1 189.0L514.0 191.2M106.4 94.8L113.3 96.0M516.2 184.3L523.1 186.5M108.7 88.6L115.5 89.7M117.8 83.5L124.6 84.6M527.6 172.6L534.4 174.8M113.2 86.0L117.8 83.5M76.9 116.5L81.5 113.9M81.5 113.9L86.0 111.3M86.0 111.3L90.6 108.8M90.6 108.8L95.1 106.2M95.1 106.2L99.6 103.7M99.6 103.7L104.2 101.1M500.3 198.3L504.9 196.0M504.9 196.0L509.4 193.6M509.4 193.6L514.0 191.2M79.9 114.5L86.8 115.6M489.7 203.5L496.6 205.6M114.8 86.0L121.6 87.1M524.6 175.1L531.4 177.3M466.9 189.9L466.0 196.3"/>
<path stroke="#00ffff" d="M70.1 115.3L76.9 116.5M493.6 207.6L500.4 209.8M72.4 109.1L79.2 110.2M79.2 110.2L86.0 111.3M81.4 104.0L88.3 105.1M504.9 196.0L511.7 198.1M90.5 98.8L97.4 100.0M514.0 191.2L520.8 193.3M92.8 92.6L99.6 93.7M99.6 93.7L106.4 94.8M101.9 87.5L108.7 88.6M525.3 179.5L532.1 181.7M110.9 82.3L117.8 83.5M86.0 101.4L90.5 98.8M90.5 98.8L95.1 96.3M95.1 96.3L99.6 93.7M99.6 93.7L104.2 91.2M104.2 91.2L108.7 88.6M108.7 88.6L113.2 86.0M514.0 191.2L518.5 188.8M518.5 188.8L523.1 186.5M523.1 186.5L527.6 184.1M73.1 113.3L79.9 114.5M496.6 205.6L503.4 207.8M107.9 84.8L114.8 86.0M146.2 167.7L145.2 174.1M200.2 139.4L199.3 145.6M411.4 225.9L410.3 232.4"/>
<path stroke="#0000ff" stroke-dasharray="1 3" d="M70.1 115.3L76.9 116.5M493.6 207.6L500.4 209.8M72.4 109.1L79.2 110.2M79.2 110.2L86.0 111.3M81.4 104.0L88.3 105.1M504.9 196.0L511.7 198.1M90.5 98.8L97.4 100.0M514.0 191.2L520.8 193.3M92.8 92.6L99.6 93.7M99.6 93.7L106.4 94.8M101.9 87.5L108.7 88.6M525.3 179.5L532.1 181.7M110.9 82.3L117.8 83.5M86.0 101.4L90.5 98.8M90.5 98.8L95.1 96.3M95.1 96.3L99.6 93.7M99.6 93.7L104.2 91.2M104.2 91.2L108.7 88.6M108.7 88.6L113.2 86.0M514.0 191.2L518.5 188.8M518.5 188.8L523.1 186.5M523.1 186.5L527.6 184.1M73.1 113.3L79.9 114.5M496.6 205.6L503.4 207.8M107.9 84.8L114.8 86.0M146.2 167.7L145.2 174.1M200.2 139.4L199.3 145.6M411.4 225.9L410.3 232.4"/>
<path stroke="#0000ff" d="M63.3 114.2L70.1 115.3M65.5 108.0L72.4 109.1M502.6 202.9L509.5 204.9M74.6 102.9L81.4 104.0M511.7 198.1L518.5 200.1M83.7 97.7L90.5 98.8M86.0 91.5L92.8 92.6M523.1 186.5L529.9 188.5M95.0 86.4L101.9 87.5M532.1 181.7L539.0 183.7M104.1 81.2L110.9 82.3M534.4 174.8L541.2 176.9M99.6 83.8L104.1 81.2M63.3 114.2L67.8 111.6M67.8 111.6L72.4 109.1M72.4 109.1L76.9 106.5M76.9 106.5L81.4 104.0M81.4 104.0L86.0 101.4M527.6 184.1L532.1 181.7M532.1 181.7L536.7 179.3M536.7 179.3L541.2 176.9M500.4 209.8L504.9 207.4M504.9 207.4L509.5 204.9M66.3 112.2L73.1 113.3M101.1 83.7L107.9 84.8M531.4 177.3L538.2 179.4M466.0 196.3L465.0 202.7"/>
<path stroke="#00ffff" stroke-dasharray="1 2" d="M63.3 114.2L70.1 115.3M65.5 108.0L72.4 109.1M502.6 202.9L509.5 204.9M74.6 102.9L81.4 104.0M511.7 198.1L518.5 200.1M83.7 97.7L90.5 98.8M86.0 91.5L92.8 92.6M523.1 186.5L529.9 188.5M95.0 86.4L101.9 87.5M532.1 181.7L539.0 183.7M104.1 81.2L110.9 82.3M534.4 174.8L541.2 176.9M99.6 83.8L104.1 81.2M63.3 114.2L67.8 111.6M67.8 111.6L72.4 109.1M72.4 109.1L76.9 106.5M76.9 106.5L81.4 104.0M81.4 104.0L86.0 101.4M527.6 184.1L532.1 181.7M532.1 181.7L536.7 179.3M536.7 179.3L541.2 176.9M500.4 209.8L504.9 207.4M504.9 207.4L509.5 204.9M66.3 112.2L73.1 113.3M101.1 83.7L107.9 84.8M531.4 177.3L538.2 179.4M466.0 196.3L465.0 202.7"/>
<path stroke="#0000ff" d="M56.4 113.1L63.3 114.2M500.4 209.8L507.2 211.8M58.7 106.9L65.5 108.0M509.5 204.9L516.3 206.9M67.8 101.7L74.6 102.9M518.5 200.1L525.4 202.1M76.9 96.6L83.7 97.7M520.8 193.3L527.6 195.3M79.1 90.4L86.0 91.5M529.9 188.5L536.7 190.5M88.2 85.3L95.0 86.4M97.3 80.1L104.1 81.2M541.2 176.9L548.1 178.9M67.8 101.7L72.3 99.2M72.3 99.2L76.9 96.6M76.9 96.6L81.4 94.1M81.4 94.1L86.0 91.5M86.0 91.5L90.5 88.9M90.5 88.9L95.0 86.4M95.0 86.4L99.6 83.8M509.5 204.9L514.0 202.5M514.0 202.5L518.5 200.1M518.5 200.1L523.1 197.7M523.1 197.7L527.6 195.3M527.6 195.3L532.2 192.9M59.4 111.1L66.3 112.2M503.4 207.8L510.2 209.8M94.3 82.6L101.1 83.7M538.2 179.4L545.1 181.4"/>
<path stroke="#00ffff" stroke-dasharray="1 5" d="M56.4 113.1L63.3 114.2M500.4 209.8L507.2 211.8M58.7 106.9L65.5 108.0M509.5 204.9L516.3 206.9M67.8 101.7L74.6 102.9M518.5 200.1L525.4 202.1M76.9 96.6L83.7 97.7M520.8 193.3L527.6 195.3M79.1 90.4L86.0 91.5M529.9 188.5L536.7 190.5M88.2 85.3L95.0 86.4M97.3 80.1L104.1 81.2M541.2 176.9L548.1 178.9M67.8 101.7L72.3 99.2M72.3 99.2L76.9 96.6M76.9 96.6L81.4 94.1M81.4 94.1L86.0 91.5M86.0 91.5L90.5 88.9M90.5 88.9L95.0 86.4M95.0 86.4L99.6 83.8M509.5 204.9L514.0 202.5M514.0 202.5L518.5 200.1M518.5 200.1L523.1 197.7M523.1 197.7L527.6 195.3M527.6 195.3L532.2 192.9M59.4 111.1L66.3 112.2M503.4 207.8L510.2 209.8M94.3 82.6L101.1 83.7M538.2 179.4L545.1 181.4"/>
<path stroke="#0000ff" d="M36.0 109.1L42.8 110.5M42.8 110.5L49.6 111.9M49.6 111.9L56.4 113.1M507.2 211.8L514.0 213.6M45.0 104.1L51.9 105.5M51.9 105.5L58.7 106.9M516.3 206.9L523.1 208.6M54.1 99.0L61.0 100.5M61.0 100.5L67.8 101.7M525.4 202.1L532.2 203.6M63.2 94.0L70.0 95.4M70.0 95.4L76.9 96.6M527.6 195.3L534.5 197.1M534.5 197.1L541.3 198.7M72.3 89.0L79.1 90.4M536.7 190.5L543.5 192.1M543.5 192.1L550.4 193.7M81.4 84.0L88.2 85.3M539.0 183.7L545.8 185.6M545.8 185.6L552.6 187.2M552.6 187.2L559.5 188.7M90.5 79.0L97.3 80.1M548.1 178.9L554.9 180.6M554.9 180.6L561.7 182.2M561.7 182.2L568.5 183.7M36.0 109.1L40.5 106.6M40.5 106.6L45.0 104.1M45.0 104.1L49.6 101.6M49.6 101.6L54.1 99.0M54.1 99.0L58.7 96.5M58.7 96.5L63.2 94.0M63.2 94.0L67.8 91.5M67.8 91.5L72.3 89.0M72.3 89.0L76.8 86.5M76.8 86.5L81.4 84.0M81.4 84.0L85.9 81.5M85.9 81.5L90.5 79.0M49.6 111.9L54.2 109.4M54.2 109.4L58.7 106.9M58.7 106.9L63.2 104.3M63.2 104.3L67.8 101.7M532.2 192.9L536.7 190.5M536.7 190.5L541.3 188.1M541.3 188.1L545.8 185.6M545.8 185.6L550.3 183.1M550.3 183.1L554.9 180.6M514.0 213.6L518.6 211.1M518.6 211.1L523.1 208.6M523.1 208.6L527.7 206.1M527.7 206.1L532.2 203.6M532.2 203.6L536.7 201.2M536.7 201.2L541.3 198.7M541.3 198.7L545.8 196.2M545.8 196.2L550.4 193.7M550.4 193.7L554.9 191.2M554.9 191.2L559.5 188.7M559.5 188.7L564.0 186.2M564.0 186.2L568.5 183.7M39.0 107.1L45.8 108.5M45.8 108.5L52.6 109.9M52.6 109.9L59.4 111.1M510.2 209.8L517.0 211.6M87.5 81.5L94.3 82.6M545.1 181.4L551.9 183.1M551.9 183.1L558.7 184.7M558.7 184.7L565.5 186.2M26.0 107.0L80.5 76.9M26.0 107.0L36.0 109.1M80.5 76.9L90.5 79.0M524.0 215.9L578.5 186.0M524.0 215.9L514.0 213.6M578.5 186.0L568.5 183.7M145.2 174.1L144.2 180.5M199.3 145.6L198.5 151.8M410.3 232.4L409.3 238.9M465.0 202.7L464.1 209.1"/>
<path stroke="#0000ff" d="M144.2 180.5L143.4 187.0M198.5 151.8L197.8 157.9M409.3 238.9L408.5 245.4M464.1 209.1L463.4 215.4"/>
<path stroke="#000080" stroke-dasharray="1 3" d="M144.2 180.5L143.4 187.0M198.5 151.8L197.8 157.9M409.3 238.9L408.5 245.4M464.1 209.1L463.4 215.4"/>
<path stroke="#000080" d="M143.4 187.0L142.8 193.4M197.8 157.9L197.3 164.1M408.5 245.4L407.9 251.9M463.4 215.4L462.8 221.8"/>
<path stroke="#0000ff" stroke-dasharray="1 2" d="M143.4 187.0L142.8 193.4M197.8 157.9L197.3 164.1M408.5 245.4L407.9 251.9M463.4 215.4L462.8 221.8"/>
<path stroke="#00008b" d="M36.0 108.0L35.6 180.0M35.6 180.0L37.3 340.0M28.6 178.2L32.6 179.5M32.6 179.5L35.6 180.0M35.6 180.0L40.1 177.8M28.9 210.2L32.9 211.5M32.9 211.5L35.9 212.0M35.9 212.0L40.4 209.8M29.3 242.2L33.3 243.5M33.3 243.5L36.3 244.0M36.3 244.0L40.8 241.8M29.6 274.2L33.6 275.5M33.6 275.5L36.6 276.0M36.6 276.0L41.1 273.8M30.0 306.2L34.0 307.5M34.0 307.5L37.0 308.0M37.0 308.0L41.5 305.8M30.3 338.2L34.3 339.5M34.3 339.5L37.3 340.0M37.3 340.0L41.8 337.8M90.5 78.0L90.3 150.0M90.3 150.0L92.5 310.0M83.3 148.2L87.3 149.5M87.3 149.5L90.3 150.0M90.3 150.0L94.8 147.8M83.7 180.2L87.7 181.5M87.7 181.5L90.7 182.0M90.7 182.0L95.2 179.8M84.2 212.2L88.2 213.5M88.2 213.5L91.2 214.0M91.2 214.0L95.7 211.8M84.6 244.2L88.6 245.5M88.6 245.5L91.6 246.0M91.6 246.0L96.1 243.8M85.1 276.2L89.1 277.5M89.1 277.5L92.1 278.0M92.1 278.0L96.6 275.8M85.5 308.2L89.5 309.5M89.5 309.5L92.5 310.0M92.5 310.0L97.0 307.8M142.8 193.4L142.5 199.9M142.5 199.9L142.5 206.3M142.5 206.3L144.6 432.6M135.5 204.5L139.5 205.8M139.5 205.8L142.5 206.3M142.5 206.3L147.0 204.1M135.8 236.8L139.8 238.1M139.8 238.1L142.8 238.6M142.8 238.6L147.3 236.4M136.1 269.2L140.1 270.5M140.1 270.5L143.1 271.0M143.1 271.0L147.6 268.8M136.4 301.5L140.4 302.8M140.4 302.8L143.4 303.3M143.4 303.3L147.9 301.1M136.7 333.8L140.7 335.1M140.7 335.1L143.7 335.6M143.7 335.6L148.2 333.4M137.0 366.1L141.0 367.4M141.0 367.4L144.0 367.9M144.0 367.9L148.5 365.7M137.3 398.5L141.3 399.8M141.3 399.8L144.3 400.3M144.3 400.3L148.8 398.1M137.6 430.8L141.6 432.1M141.6 432.1L144.6 432.6M144.6 432.6L149.1 430.4M197.3 164.1L197.0 170.2M197.0 170.2L197.0 176.4M197.0 176.4L199.5 402.6M190.0 174.6L194.0 175.9M194.0 175.9L197.0 176.4M197.0 176.4L201.5 174.2M190.4 206.9L194.4 208.2M194.4 208.2L197.4 208.7M197.4 208.7L201.9 206.5M190.7 239.2L194.7 240.5M194.7 240.5L197.7 241.0M197.7 241.0L202.2 238.8M191.1 271.5L195.1 272.8M195.1 272.8L198.1 273.3M198.1 273.3L202.6 271.1M191.4 303.9L195.4 305.2M195.4 305.2L198.4 305.7M198.4 305.7L202.9 303.5M191.8 336.2L195.8 337.5M195.8 337.5L198.8 338.0M198.8 338.0L203.3 335.8M192.1 368.5L196.1 369.8M196.1 369.8L199.1 370.3M199.1 370.3L203.6 368.1M192.5 400.8L196.5 402.1M196.5 402.1L199.5 402.6M199.5 402.6L204.0 400.4M407.9 251.9L407.5 258.4M407.5 258.4L407.5 264.9M407.5 264.9L409.2 490.3M400.5 263.1L404.5 264.4M404.5 264.4L407.5 264.9M407.5 264.9L412.0 262.7M400.7 295.3L404.7 296.6M404.7 296.6L407.7 297.1M407.7 297.1L412.2 294.9M401.0 327.5L405.0 328.8M405.0 328.8L408.0 329.3M408.0 329.3L412.5 327.1M401.2 359.7L405.2 361.0M405.2 361.0L408.2 361.5M408.2 361.5L412.7 359.3M401.5 391.9L405.5 393.2M405.5 393.2L408.5 393.7M408.5 393.7L413.0 391.5M401.7 424.1L405.7 425.4M405.7 425.4L408.7 425.9M408.7 425.9L413.2 423.7M402.0 456.3L406.0 457.6M406.0 457.6L409.0 458.1M409.0 458.1L413.5 455.9M402.2 488.5L406.2 489.8M406.2 489.8L409.2 490.3M409.2 490.3L413.7 488.1M462.8 221.8L462.5 228.2M462.5 228.2L462.5 234.6M462.5 234.6L464.2 460.4M455.5 232.8L459.5 234.1M459.5 234.1L462.5 234.6M462.5 234.6L467.0 232.4M455.7 265.1L459.7 266.4M459.7 266.4L462.7 266.9M462.7 266.9L467.2 264.7M456.0 297.3L460.0 298.6M460.0 298.6L463.0 299.1M463.0 299.1L467.5 296.9M456.2 329.6L460.2 330.9M460.2 330.9L463.2 331.4M463.2 331.4L467.7 329.2M456.5 361.8L460.5 363.1M460.5 363.1L463.5 363.6M463.5 363.6L468.0 361.4M456.7 394.1L460.7 395.4M460.7 395.4L463.7 395.9M463.7 395.9L468.2 393.7M457.0 426.3L461.0 427.6M461.0 427.6L464.0 428.1M464.0 428.1L468.5 425.9M457.2 458.6L461.2 459.9M461.2 459.9L464.2 460.4M464.2 460.4L468.7 458.2M514.0 213.0L513.8 284.0M513.8 284.0L514.4 445.1M506.8 282.2L510.8 283.5M510.8 283.5L513.8 284.0M513.8 284.0L518.3 281.8M506.9 314.4L510.9 315.7M510.9 315.7L513.9 316.2M513.9 316.2L518.4 314.0M507.0 346.6L511.0 347.9M511.0 347.9L514.0 348.4M514.0 348.4L518.5 346.2M507.2 378.9L511.2 380.2M511.2 380.2L514.2 380.7M514.2 380.7L518.7 378.5M507.3 411.1L511.3 412.4M511.3 412.4L514.3 412.9M514.3 412.9L518.8 410.7M507.4 443.3L511.4 444.6M511.4 444.6L514.4 445.1M514.4 445.1L518.9 442.9M569.5 184.0L568.2 254.7M568.2 254.7L569.4 414.3M561.2 252.9L565.2 254.2M565.2 254.2L568.2 254.7M568.2 254.7L572.7 252.5M561.4 284.8L565.4 286.1M565.4 286.1L568.4 286.6M568.4 286.6L572.9 284.4M561.7 316.7L565.7 318.0M565.7 318.0L568.7 318.5M568.7 318.5L573.2 316.3M561.9 348.7L565.9 350.0M565.9 350.0L568.9 350.5M568.9 350.5L573.4 348.3M562.2 380.6L566.2 381.9M566.2 381.9L569.2 382.4M569.2 382.4L573.7 380.2M562.4 412.5L566.4 413.8M566.4 413.8L569.4 414.3M569.4 414.3L573.9 412.1"/>
</g>
<path shape-rendering="crispEdges" fill="#808080" d="M35 108h2v2h-2zM49 111h2v2h-2zM62 113h2v2h-2zM76 115h2v2h-2zM90 118h2v2h-2zM103 120h2v2h-2zM117 122h2v2h-2zM131 124h2v2h-2zM144 126h2v2h-2zM158 129h2v2h-2zM172 131h2v2h-2zM185 134h2v2h-2zM199 137h2v2h-2zM213 139h2v2h-2zM226 141h2v2h-2zM240 144h2v2h-2zM254 146h2v2h-2zM267 149h2v2h-2zM281 152h2v2h-2zM294 155h2v2h-2zM308 158h2v2h-2zM322 161h2v2h-2zM335 164h2v2h-2zM349 168h2v2h-2zM363 172h2v2h-2zM376 176h2v2h-2zM390 179h2v2h-2zM404 183h2v2h-2zM417 186h2v2h-2zM431 190h2v2h-2zM445 193h2v2h-2zM458 197h2v2h-2zM472 201h2v2h-2zM486 204h2v2h-2zM499 209h2v2h-2zM513 213h2v2h-2zM44 103h2v2h-2zM58 106h2v2h-2zM71 108h2v2h-2zM85 110h2v2h-2zM99 113h2v2h-2zM112 115h2v2h-2zM126 117h2v2h-2zM140 119h2v2h-2zM153 121h2v2h-2zM167 124h2v2h-2zM181 126h2v2h-2zM194 129h2v2h-2zM208 132h2v2h-2zM222 134h2v2h-2zM235 136h2v2h-2zM249 139h2v2h-2zM263 141h2v2h-2zM276 144h2v2h-2zM290 147h2v2h-2zM304 150h2v2h-2zM317 153h2v2h-2zM331 156h2v2h-2zM345 159h2v2h-2zM358 163h2v2h-2zM372 167h2v2h-2zM386 171h2v2h-2zM399 174h2v2h-2zM413 178h2v2h-2zM427 181h2v2h-2zM440 185h2v2h-2zM454 189h2v2h-2zM467 192h2v2h-2zM481 196h2v2h-2zM495 200h2v2h-2zM508 204h2v2h-2zM522 208h2v2h-2zM53 98h2v2h-2zM67 101h2v2h-2zM80 103h2v2h-2zM94 105h2v2h-2zM108 107h2v2h-2zM121 110h2v2h-2zM135 112h2v2h-2zM149 114h2v2h-2zM162 116h2v2h-2zM176 119h2v2h-2zM190 121h2v2h-2zM203 124h2v2h-2zM217 127h2v2h-2zM231 129h2v2h-2zM244 131h2v2h-2zM258 134h2v2h-2zM272 136h2v2h-2zM285 139h2v2h-2zM299 142h2v2h-2zM313 145h2v2h-2zM326 148h2v2h-2zM340 151h2v2h-2zM354 154h2v2h-2zM367 158h2v2h-2zM381 162h2v2h-2zM395 166h2v2h-2zM408 169h2v2h-2zM422 173h2v2h-2zM436 176h2v2h-2zM449 180h2v2h-2zM463 184h2v2h-2zM477 187h2v2h-2zM490 191h2v2h-2zM504 195h2v2h-2zM518 199h2v2h-2zM531 203h2v2h-2zM62 93h2v2h-2zM76 96h2v2h-2zM90 98h2v2h-2zM103 100h2v2h-2zM117 102h2v2h-2zM131 105h2v2h-2zM144 107h2v2h-2zM158 109h2v2h-2zM171 111h2v2h-2zM185 114h2v2h-2zM199 116h2v2h-2zM212 119h2v2h-2zM226 122h2v2h-2zM240 124h2v2h-2zM253 126h2v2h-2zM267 129h2v2h-2zM281 131h2v2h-2zM294 134h2v2h-2zM308 137h2v2h-2zM322 140h2v2h-2zM335 143h2v2h-2zM349 146h2v2h-2zM363 149h2v2h-2zM376 153h2v2h-2zM390 157h2v2h-2zM404 161h2v2h-2zM417 164h2v2h-2zM431 168h2v2h-2zM445 171h2v2h-2zM458 175h2v2h-2zM472 179h2v2h-2zM486 182h2v2h-2zM499 186h2v2h-2zM513 190h2v2h-2zM527 194h2v2h-2zM540 198h2v2h-2zM71 88h2v2h-2zM85 90h2v2h-2zM99 93h2v2h-2zM112 95h2v2h-2zM126 97h2v2h-2zM140 100h2v2h-2zM153 102h2v2h-2zM167 104h2v2h-2zM181 106h2v2h-2zM194 109h2v2h-2zM208 111h2v2h-2zM222 114h2v2h-2zM235 117h2v2h-2zM249 119h2v2h-2zM263 121h2v2h-2zM276 124h2v2h-2zM290 126h2v2h-2zM304 129h2v2h-2zM317 132h2v2h-2zM331 135h2v2h-2zM344 138h2v2h-2zM358 141h2v2h-2zM372 144h2v2h-2zM385 148h2v2h-2zM399 152h2v2h-2zM413 156h2v2h-2zM426 159h2v2h-2zM440 163h2v2h-2zM454 166h2v2h-2zM467 170h2v2h-2zM481 174h2v2h-2zM495 178h2v2h-2zM508 181h2v2h-2zM522 185h2v2h-2zM536 190h2v2h-2zM549 193h2v2h-2zM80 83h2v2h-2zM94 85h2v2h-2zM108 88h2v2h-2zM121 90h2v2h-2zM135 92h2v2h-2zM149 94h2v2h-2zM162 97h2v2h-2zM176 99h2v2h-2zM190 101h2v2h-2zM203 104h2v2h-2zM217 106h2v2h-2zM231 109h2v2h-2zM244 112h2v2h-2zM258 114h2v2h-2zM272 116h2v2h-2zM285 119h2v2h-2zM299 121h2v2h-2zM313 124h2v2h-2zM326 127h2v2h-2zM340 130h2v2h-2zM354 133h2v2h-2zM367 136h2v2h-2zM381 139h2v2h-2zM395 143h2v2h-2zM408 147h2v2h-2zM422 151h2v2h-2zM436 154h2v2h-2zM449 158h2v2h-2zM463 161h2v2h-2zM477 165h2v2h-2zM490 169h2v2h-2zM504 173h2v2h-2zM517 176h2v2h-2zM531 181h2v2h-2zM545 185h2v2h-2zM558 188h2v2h-2zM89 78h2v2h-2zM103 80h2v2h-2zM117 82h2v2h-2zM130 85h2v2h-2zM144 87h2v2h-2zM158 89h2v2h-2zM171 91h2v2h-2zM185 93h2v2h-2zM199 96h2v2h-2zM212 99h2v2h-2zM226 101h2v2h-2zM240 104h2v2h-2zM253 107h2v2h-2zM267 109h2v2h-2zM281 111h2v2h-2zM294 114h2v2h-2zM308 116h2v2h-2zM322 119h2v2h-2zM335 122h2v2h-2zM349 125h2v2h-2zM363 128h2v2h-2zM376 131h2v2h-2zM390 134h2v2h-2zM404 138h2v2h-2zM417 142h2v2h-2zM431 146h2v2h-2zM445 149h2v2h-2zM458 153h2v2h-2zM472 156h2v2h-2zM486 160h2v2h-2zM499 164h2v2h-2zM513 168h2v2h-2zM527 172h2v2h-2zM540 176h2v2h-2zM554 180h2v2h-2zM568 183h2v2h-2zM40 106h2v2h-2zM49 101h2v2h-2zM58 96h2v2h-2zM67 91h2v2h-2zM76 85h2v2h-2zM85 80h2v2h-2zM67 111h2v2h-2zM76 106h2v2h-2zM85 100h2v2h-2zM94 95h2v2h-2zM103 90h2v2h-2zM112 85h2v2h-2zM94 115h2v2h-2zM103 110h2v2h-2zM112 105h2v2h-2zM121 100h2v2h-2zM130 95h2v2h-2zM140 90h2v2h-2zM121 120h2v2h-2zM131 115h2v2h-2zM140 109h2v2h-2zM149 104h2v2h-2zM158 99h2v2h-2zM167 94h2v2h-2zM149 124h2v2h-2zM158 119h2v2h-2zM167 114h2v2h-2zM176 108h2v2h-2zM185 103h2v2h-2zM194 98h2v2h-2zM176 129h2v2h-2zM185 124h2v2h-2zM194 119h2v2h-2zM203 114h2v2h-2zM212 109h2v2h-2zM222 104h2v2h-2zM203 134h2v2h-2zM212 129h2v2h-2zM222 124h2v2h-2zM231 119h2v2h-2zM240 114h2v2h-2zM249 109h2v2h-2zM231 139h2v2h-2zM240 134h2v2h-2zM249 129h2v2h-2zM258 124h2v2h-2zM267 119h2v2h-2zM276 114h2v2h-2zM258 144h2v2h-2zM267 139h2v2h-2zM276 134h2v2h-2zM285 129h2v2h-2zM294 124h2v2h-2zM303 119h2v2h-2zM285 150h2v2h-2zM294 145h2v2h-2zM304 140h2v2h-2zM313 135h2v2h-2zM322 130h2v2h-2zM331 125h2v2h-2zM313 155h2v2h-2zM322 150h2v2h-2zM331 145h2v2h-2zM340 140h2v2h-2zM349 135h2v2h-2zM358 130h2v2h-2zM340 162h2v2h-2zM349 157h2v2h-2zM358 152h2v2h-2zM367 147h2v2h-2zM376 142h2v2h-2zM385 137h2v2h-2zM367 170h2v2h-2zM376 165h2v2h-2zM385 160h2v2h-2zM395 155h2v2h-2zM404 150h2v2h-2zM413 145h2v2h-2zM395 177h2v2h-2zM404 172h2v2h-2zM413 167h2v2h-2zM422 162h2v2h-2zM431 157h2v2h-2zM440 152h2v2h-2zM422 184h2v2h-2zM431 179h2v2h-2zM440 174h2v2h-2zM449 169h2v2h-2zM458 164h2v2h-2zM467 159h2v2h-2zM449 191h2v2h-2zM458 186h2v2h-2zM467 181h2v2h-2zM477 176h2v2h-2zM486 171h2v2h-2zM495 167h2v2h-2zM477 198h2v2h-2zM486 193h2v2h-2zM495 189h2v2h-2zM504 184h2v2h-2zM513 179h2v2h-2zM522 174h2v2h-2zM504 206h2v2h-2zM513 202h2v2h-2zM522 197h2v2h-2zM531 192h2v2h-2zM540 187h2v2h-2zM549 182h2v2h-2zM25 106h2v2h-2zM32 102h2v2h-2zM39 98h2v2h-2zM45 95h2v2h-2zM52 91h2v2h-2zM59 87h2v2h-2zM66 83h2v2h-2zM73 80h2v2h-2zM79 76h2v2h-2zM523 215h2v2h-2zM530 211h2v2h-2zM537 207h2v2h-2zM543 204h2v2h-2zM550 200h2v2h-2zM557 196h2v2h-2zM564 192h2v2h-2zM571 189h2v2h-2zM577 185h2v2h-2zM35 129h2v2h-2zM35 152h2v2h-2zM35 172h2v2h-2zM27 177h2v2h-2zM40 176h2v2h-2zM35 179h2v2h-2zM27 209h2v2h-2zM40 208h2v2h-2zM35 211h2v2h-2zM28 241h2v2h-2zM40 240h2v2h-2zM35 243h2v2h-2zM28 273h2v2h-2zM41 272h2v2h-2zM36 275h2v2h-2zM28 305h2v2h-2zM41 304h2v2h-2zM36 307h2v2h-2zM29 337h2v2h-2zM41 336h2v2h-2zM36 339h2v2h-2zM89 99h2v2h-2zM89 122h2v2h-2zM89 142h2v2h-2zM82 147h2v2h-2zM95 146h2v2h-2zM89 149h2v2h-2zM82 179h2v2h-2zM95 178h2v2h-2zM90 181h2v2h-2zM83 211h2v2h-2zM95 210h2v2h-2zM90 213h2v2h-2zM83 243h2v2h-2zM96 242h2v2h-2zM91 245h2v2h-2zM84 275h2v2h-2zM96 274h2v2h-2zM91 277h2v2h-2zM84 307h2v2h-2zM97 306h2v2h-2zM91 309h2v2h-2zM148 151h2v2h-2zM144 176h2v2h-2zM142 198h2v2h-2zM134 203h2v2h-2zM147 203h2v2h-2zM141 205h2v2h-2zM134 236h2v2h-2zM147 235h2v2h-2zM142 238h2v2h-2zM135 268h2v2h-2zM147 267h2v2h-2zM142 270h2v2h-2zM135 300h2v2h-2zM148 300h2v2h-2zM142 302h2v2h-2zM135 333h2v2h-2zM148 332h2v2h-2zM143 335h2v2h-2zM135 365h2v2h-2zM148 364h2v2h-2zM143 367h2v2h-2zM136 397h2v2h-2zM148 397h2v2h-2zM143 399h2v2h-2zM136 430h2v2h-2zM149 429h2v2h-2zM144 432h2v2h-2zM201 124h2v2h-2zM198 147h2v2h-2zM196 168h2v2h-2zM189 173h2v2h-2zM201 173h2v2h-2zM196 175h2v2h-2zM189 206h2v2h-2zM202 205h2v2h-2zM196 208h2v2h-2zM189 238h2v2h-2zM202 237h2v2h-2zM197 240h2v2h-2zM190 270h2v2h-2zM202 270h2v2h-2zM197 272h2v2h-2zM190 303h2v2h-2zM203 302h2v2h-2zM197 305h2v2h-2zM190 335h2v2h-2zM203 334h2v2h-2zM198 337h2v2h-2zM191 367h2v2h-2zM203 367h2v2h-2zM198 369h2v2h-2zM191 400h2v2h-2zM204 399h2v2h-2zM199 402h2v2h-2zM413 209h2v2h-2zM409 234h2v2h-2zM407 256h2v2h-2zM399 262h2v2h-2zM412 261h2v2h-2zM407 264h2v2h-2zM399 294h2v2h-2zM412 293h2v2h-2zM407 296h2v2h-2zM399 326h2v2h-2zM412 326h2v2h-2zM407 328h2v2h-2zM400 359h2v2h-2zM412 358h2v2h-2zM407 361h2v2h-2zM400 391h2v2h-2zM413 390h2v2h-2zM407 393h2v2h-2zM400 423h2v2h-2zM413 422h2v2h-2zM408 425h2v2h-2zM400 455h2v2h-2zM413 455h2v2h-2zM408 457h2v2h-2zM401 487h2v2h-2zM413 487h2v2h-2zM408 489h2v2h-2zM467 180h2v2h-2zM464 204h2v2h-2zM462 226h2v2h-2zM454 232h2v2h-2zM467 231h2v2h-2zM461 234h2v2h-2zM454 264h2v2h-2zM467 263h2v2h-2zM462 266h2v2h-2zM454 296h2v2h-2zM467 296h2v2h-2zM462 298h2v2h-2zM455 328h2v2h-2zM467 328h2v2h-2zM462 330h2v2h-2zM455 361h2v2h-2zM468 360h2v2h-2zM462 363h2v2h-2zM455 393h2v2h-2zM468 392h2v2h-2zM463 395h2v2h-2zM455 425h2v2h-2zM468 425h2v2h-2zM463 427h2v2h-2zM456 457h2v2h-2zM468 457h2v2h-2zM463 459h2v2h-2zM513 233h2v2h-2zM513 256h2v2h-2zM513 276h2v2h-2zM505 281h2v2h-2zM518 280h2v2h-2zM513 283h2v2h-2zM505 313h2v2h-2zM518 313h2v2h-2zM513 315h2v2h-2zM506 345h2v2h-2zM518 345h2v2h-2zM513 347h2v2h-2zM506 378h2v2h-2zM518 377h2v2h-2zM513 380h2v2h-2zM506 410h2v2h-2zM518 409h2v2h-2zM513 412h2v2h-2zM506 442h2v2h-2zM519 441h2v2h-2zM513 444h2v2h-2zM568 204h2v2h-2zM568 227h2v2h-2zM567 247h2v2h-2zM560 252h2v2h-2zM572 251h2v2h-2zM567 254h2v2h-2zM560 284h2v2h-2zM573 283h2v2h-2zM567 286h2v2h-2zM560 316h2v2h-2zM573 315h2v2h-2zM568 318h2v2h-2zM560 347h2v2h-2zM573 347h2v2h-2zM568 349h2v2h-2zM561 379h2v2h-2zM573 379h2v2h-2zM568 381h2v2h-2zM561 411h2v2h-2zM574 411h2v2h-2zM568 413h2v2h-2z"/>
</svg>
</body></html>
